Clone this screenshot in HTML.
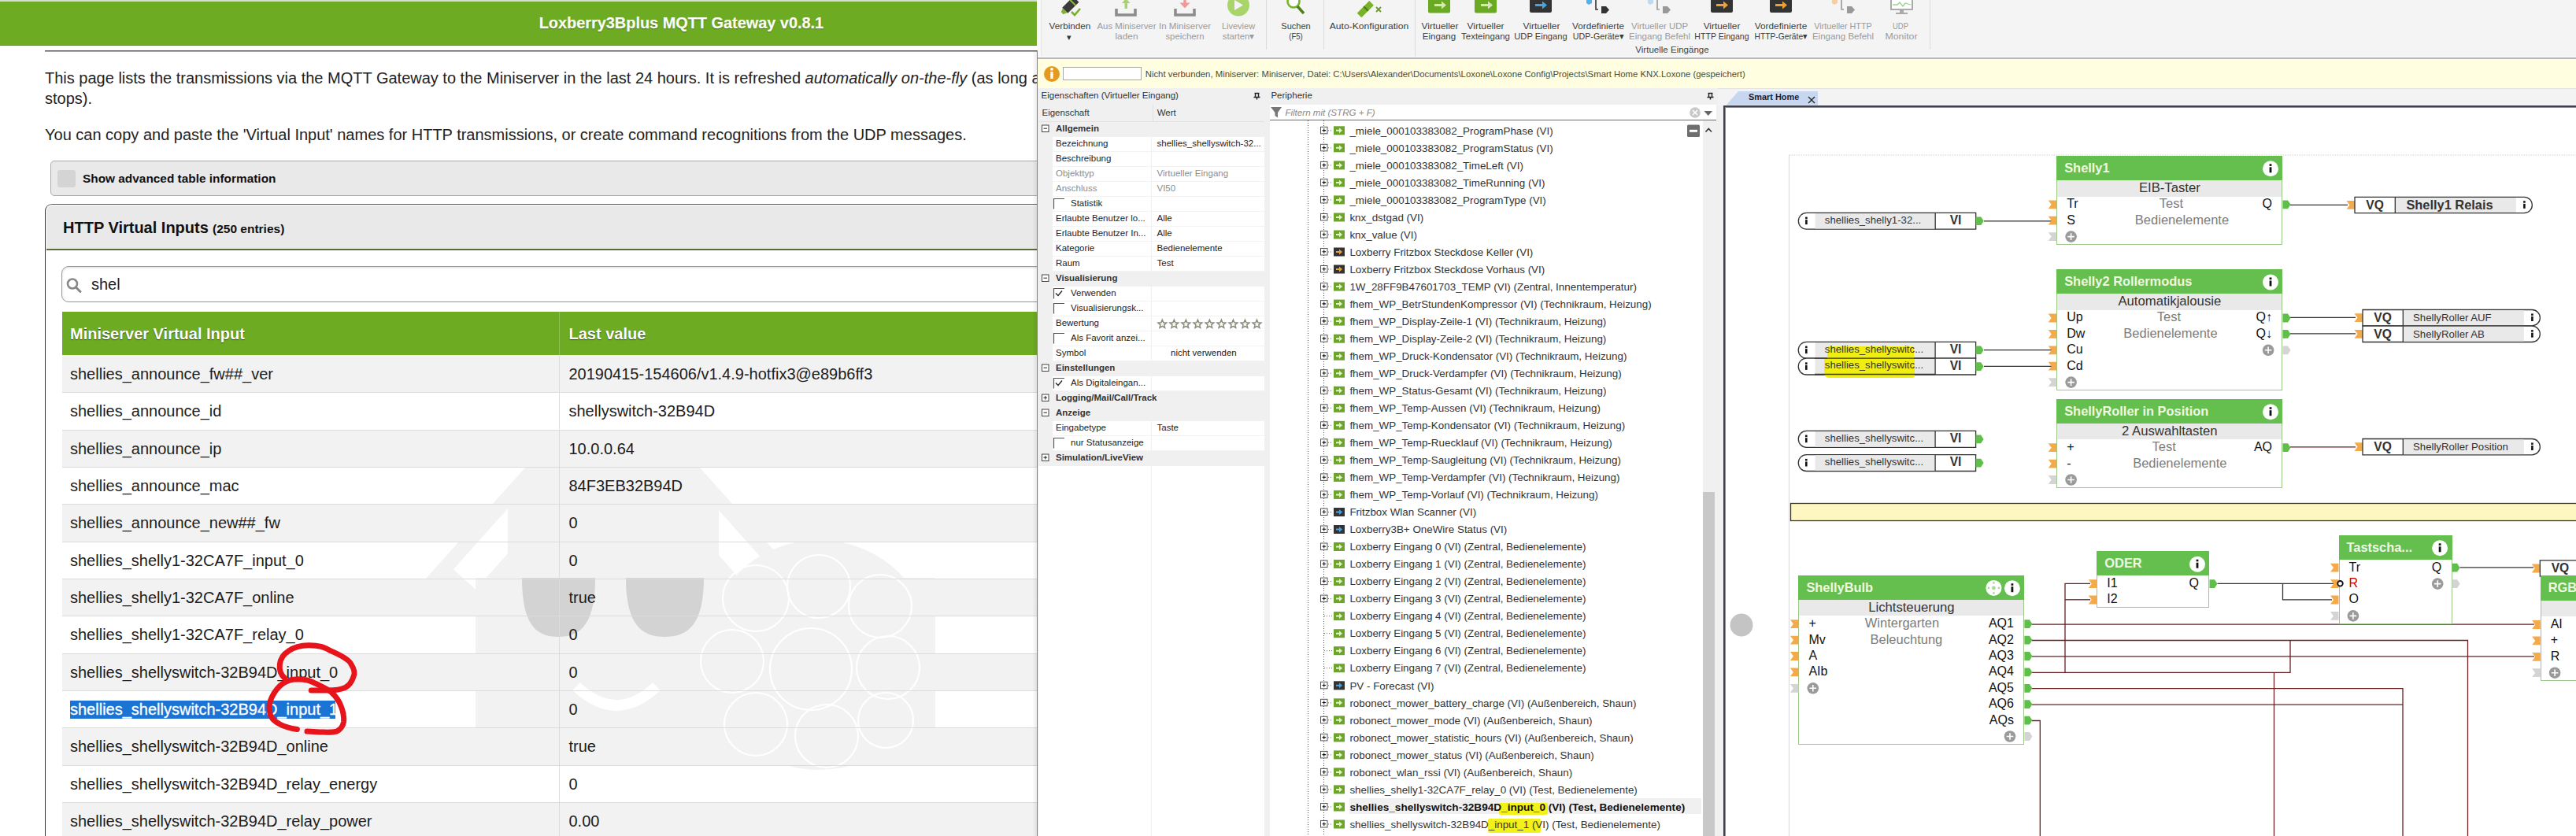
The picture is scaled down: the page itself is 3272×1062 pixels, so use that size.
<!DOCTYPE html><html><head><meta charset="utf-8"><style>
html,body{margin:0;padding:0}
body{width:3272px;height:1062px;position:relative;overflow:hidden;background:#fff;font-family:"Liberation Sans",sans-serif}
.t{position:absolute;white-space:pre;line-height:1}
.b{position:absolute;box-sizing:border-box}
.web{position:absolute;left:0;top:0;width:1318px;height:1062px;overflow:hidden;background:#fff}
.app{position:absolute;left:0;top:0;width:3272px;height:1062px;clip-path:inset(0 0 0 1318px);background:#f0f0f0}
svg{position:absolute;left:0;top:0}
</style></head><body>

<div class="web">
<div class="b" style="left:0.00px;top:0.00px;width:1317.00px;height:2.00px;background:#d9d9d9"></div>
<div class="b" style="left:0.00px;top:2.00px;width:1317.00px;height:56.00px;background:#6dab22;border-bottom:1px solid #5a8f1a"></div>
<div class="t" style="left:684.70px;top:20.45px;font-size:19.9px;color:#fbfff2;font-weight:bold;font-style:normal;text-shadow:0 1px 1px #3a5a15;-webkit-text-stroke:0.25px #fbfff2">Loxberry3Bplus MQTT Gateway v0.8.1</div>
<div class="b" style="left:57.00px;top:64.00px;width:1260.00px;height:2.00px;background:#555;border-bottom:1px solid #aaa"></div>
<div class="t" style="left:57.00px;top:89.07px;font-size:20px;color:#222;font-weight:normal;font-style:normal;">This page lists the transmissions via the MQTT Gateway to the Miniserver in the last 24 hours. It is refreshed <i>automatically on-the-fly</i> (as long as the page is open and the gateway is running</div>
<div class="t" style="left:57.00px;top:114.67px;font-size:20px;color:#222;font-weight:normal;font-style:normal;">stops).</div>
<div class="t" style="left:57.00px;top:161.07px;font-size:20px;color:#222;font-weight:normal;font-style:normal;">You can copy and paste the 'Virtual Input' names for HTTP transmissions, or create command recognitions from the UDP messages.</div>
<div class="b" style="left:64.00px;top:204.00px;width:1300.00px;height:45.00px;background:#e9e9e9;border:1px solid #aaa;border-radius:5px"></div>
<div class="b" style="left:73.00px;top:215.50px;width:23.00px;height:22.50px;background:#d4d4d4;border-radius:3px"></div>
<div class="t" style="left:105.00px;top:218.96px;font-size:15.4px;color:#111;font-weight:bold;font-style:normal;">Show advanced table information</div>
<div class="b" style="left:57.00px;top:259.00px;width:1300.00px;height:820.00px;border:1.5px solid #333;border-top-color:#4d6b30;border-radius:9px 0 0 0;background:#fff"></div>
<div class="b" style="left:58.50px;top:260.50px;width:1300.00px;height:57.50px;background:#e9e9e9;border-radius:8px 0 0 0;border-bottom:2px solid #556f38"></div>
<div class="t" style="left:80.00px;top:279.07px;font-size:20px;color:#111;font-weight:bold;font-style:normal;">HTTP Virtual Inputs</div>
<div class="t" style="left:270.00px;top:282.88px;font-size:15.5px;color:#111;font-weight:bold;font-style:normal;">(250 entries)</div>
<div class="b" style="left:78.00px;top:338.00px;width:1300.00px;height:46.00px;background:#fff;border:1px solid #999;border-radius:9px;box-shadow:inset 0 1px 3px rgba(0,0,0,.15)"></div>
<svg width="1317" height="1062" style="left:0;top:0"><circle cx="92" cy="360.5" r="6" fill="none" stroke="#888" stroke-width="2.6"/><line x1="96.5" y1="365" x2="102" y2="370.5" stroke="#888" stroke-width="3" stroke-linecap="round"/></svg>
<div class="t" style="left:116.00px;top:350.57px;font-size:20px;color:#222;font-weight:normal;font-style:normal;">shel</div>
<div class="b" style="left:79.00px;top:396.00px;width:1240.00px;height:55.00px;background:#6dab22"></div>
<div class="b" style="left:710.00px;top:396.00px;width:1.00px;height:55.00px;background:#8fc255"></div>
<div class="t" style="left:89.00px;top:414.07px;font-size:20px;color:#fff;font-weight:bold;font-style:normal;text-shadow:0 1px 1px #2e4a10">Miniserver Virtual Input</div>
<div class="t" style="left:722.50px;top:414.07px;font-size:20px;color:#fff;font-weight:bold;font-style:normal;text-shadow:0 1px 1px #2e4a10">Last value</div>
<div class="b" style="left:79.00px;top:451.00px;width:1240.00px;height:47.33px;background:#f2f2f2"></div>
<div class="b" style="left:79.00px;top:498.33px;width:1240.00px;height:47.33px;background:#ffffff"></div>
<div class="b" style="left:79.00px;top:545.66px;width:1240.00px;height:47.33px;background:#f2f2f2"></div>
<div class="b" style="left:79.00px;top:592.99px;width:1240.00px;height:47.33px;background:#ffffff"></div>
<div class="b" style="left:79.00px;top:640.32px;width:1240.00px;height:47.33px;background:#f2f2f2"></div>
<div class="b" style="left:79.00px;top:687.65px;width:1240.00px;height:47.33px;background:#ffffff"></div>
<div class="b" style="left:79.00px;top:734.98px;width:1240.00px;height:47.33px;background:#f2f2f2"></div>
<div class="b" style="left:79.00px;top:782.31px;width:1240.00px;height:47.33px;background:#ffffff"></div>
<div class="b" style="left:79.00px;top:829.64px;width:1240.00px;height:47.33px;background:#f2f2f2"></div>
<div class="b" style="left:79.00px;top:876.97px;width:1240.00px;height:47.33px;background:#ffffff"></div>
<div class="b" style="left:79.00px;top:924.30px;width:1240.00px;height:47.33px;background:#f2f2f2"></div>
<div class="b" style="left:79.00px;top:971.63px;width:1240.00px;height:47.33px;background:#ffffff"></div>
<div class="b" style="left:79.00px;top:1018.96px;width:1240.00px;height:47.33px;background:#f2f2f2"></div>
<svg width="1317" height="1062">
<defs><clipPath id="wm"><rect x="79" y="547" width="1240" height="520"/></clipPath></defs>
<g clip-path="url(#wm)">
<polygon points="540,736 778,470 1016,736" fill="#f2f2f2"/>
<polyline points="590,736 778,526 966,736" fill="none" stroke="#fff" stroke-width="38"/>
<polygon points="645,641 778,492 913,641 913,736 645,736" fill="#f2f2f2"/>
<rect x="604" y="734" width="584" height="192" fill="#f2f2f2"/>
<circle cx="1040" cy="832" r="146" fill="#f2f2f2"/>
<g fill="none" stroke="#fff" stroke-width="2.2">
<circle cx="960" cy="760" r="42"/><circle cx="1040" cy="745" r="40"/><circle cx="1118" cy="770" r="40"/>
<circle cx="930" cy="840" r="40"/><circle cx="1030" cy="850" r="52"/><circle cx="1128" cy="848" r="40"/>
<circle cx="960" cy="920" r="40"/><circle cx="1050" cy="935" r="40"/><circle cx="1125" cy="915" r="35"/>
</g>
<path d="M663,734 L756,734 C756,792 738,809 709,809 C680,809 663,792 663,734 Z" fill="#d3d3d3"/>
<path d="M795,734 L894,734 C894,792 875,809 844,809 C814,809 795,792 795,734 Z" fill="#d3d3d3"/>
<path d="M732,872 Q783,920 834,872" fill="none" stroke="#fff" stroke-width="14"/>
</g>
</svg>
<div class="b" style="left:79.00px;top:498.33px;width:1240.00px;height:1.00px;background:#dcdcdc"></div>
<div class="b" style="left:79.00px;top:545.66px;width:1240.00px;height:1.00px;background:#dcdcdc"></div>
<div class="b" style="left:79.00px;top:592.99px;width:1240.00px;height:1.00px;background:#dcdcdc"></div>
<div class="b" style="left:79.00px;top:640.32px;width:1240.00px;height:1.00px;background:#dcdcdc"></div>
<div class="b" style="left:79.00px;top:687.65px;width:1240.00px;height:1.00px;background:#dcdcdc"></div>
<div class="b" style="left:79.00px;top:734.98px;width:1240.00px;height:1.00px;background:#dcdcdc"></div>
<div class="b" style="left:79.00px;top:782.31px;width:1240.00px;height:1.00px;background:#dcdcdc"></div>
<div class="b" style="left:79.00px;top:829.64px;width:1240.00px;height:1.00px;background:#dcdcdc"></div>
<div class="b" style="left:79.00px;top:876.97px;width:1240.00px;height:1.00px;background:#dcdcdc"></div>
<div class="b" style="left:79.00px;top:924.30px;width:1240.00px;height:1.00px;background:#dcdcdc"></div>
<div class="b" style="left:79.00px;top:971.63px;width:1240.00px;height:1.00px;background:#dcdcdc"></div>
<div class="b" style="left:79.00px;top:1018.96px;width:1240.00px;height:1.00px;background:#dcdcdc"></div>
<div class="b" style="left:79.00px;top:1066.29px;width:1240.00px;height:1.00px;background:#dcdcdc"></div>
<div class="b" style="left:710.00px;top:451.00px;width:1.00px;height:615.29px;background:#dcdcdc"></div>
<div class="t" style="left:89.00px;top:465.07px;font-size:20px;color:#1c1c1c;font-weight:normal;font-style:normal;">shellies_announce_fw##_ver</div>
<div class="t" style="left:722.50px;top:465.07px;font-size:20px;color:#1c1c1c;font-weight:normal;font-style:normal;">20190415-154606/v1.4.9-hotfix3@e89b6ff3</div>
<div class="t" style="left:89.00px;top:512.40px;font-size:20px;color:#1c1c1c;font-weight:normal;font-style:normal;">shellies_announce_id</div>
<div class="t" style="left:722.50px;top:512.40px;font-size:20px;color:#1c1c1c;font-weight:normal;font-style:normal;">shellyswitch-32B94D</div>
<div class="t" style="left:89.00px;top:559.73px;font-size:20px;color:#1c1c1c;font-weight:normal;font-style:normal;">shellies_announce_ip</div>
<div class="t" style="left:722.50px;top:559.73px;font-size:20px;color:#1c1c1c;font-weight:normal;font-style:normal;">10.0.0.64</div>
<div class="t" style="left:89.00px;top:607.06px;font-size:20px;color:#1c1c1c;font-weight:normal;font-style:normal;">shellies_announce_mac</div>
<div class="t" style="left:722.50px;top:607.06px;font-size:20px;color:#1c1c1c;font-weight:normal;font-style:normal;">84F3EB32B94D</div>
<div class="t" style="left:89.00px;top:654.39px;font-size:20px;color:#1c1c1c;font-weight:normal;font-style:normal;">shellies_announce_new##_fw</div>
<div class="t" style="left:722.50px;top:654.39px;font-size:20px;color:#1c1c1c;font-weight:normal;font-style:normal;">0</div>
<div class="t" style="left:89.00px;top:701.72px;font-size:20px;color:#1c1c1c;font-weight:normal;font-style:normal;">shellies_shelly1-32CA7F_input_0</div>
<div class="t" style="left:722.50px;top:701.72px;font-size:20px;color:#1c1c1c;font-weight:normal;font-style:normal;">0</div>
<div class="t" style="left:89.00px;top:749.05px;font-size:20px;color:#1c1c1c;font-weight:normal;font-style:normal;">shellies_shelly1-32CA7F_online</div>
<div class="t" style="left:722.50px;top:749.05px;font-size:20px;color:#1c1c1c;font-weight:normal;font-style:normal;">true</div>
<div class="t" style="left:89.00px;top:796.38px;font-size:20px;color:#1c1c1c;font-weight:normal;font-style:normal;">shellies_shelly1-32CA7F_relay_0</div>
<div class="t" style="left:722.50px;top:796.38px;font-size:20px;color:#1c1c1c;font-weight:normal;font-style:normal;">0</div>
<div class="t" style="left:89.00px;top:843.71px;font-size:20px;color:#1c1c1c;font-weight:normal;font-style:normal;">shellies_shellyswitch-32B94D_input_0</div>
<div class="t" style="left:722.50px;top:843.71px;font-size:20px;color:#1c1c1c;font-weight:normal;font-style:normal;">0</div>
<div class="b" style="left:89.00px;top:890.00px;width:337.00px;height:22.70px;background:#1b74d4"></div>
<div class="t" style="left:89.00px;top:891.04px;font-size:20px;color:#fff;font-weight:normal;font-style:normal;-webkit-text-stroke:0.3px #fff">shellies_shellyswitch-32B94D_input_1</div>
<div class="t" style="left:722.50px;top:891.04px;font-size:20px;color:#1c1c1c;font-weight:normal;font-style:normal;">0</div>
<div class="t" style="left:89.00px;top:938.37px;font-size:20px;color:#1c1c1c;font-weight:normal;font-style:normal;">shellies_shellyswitch-32B94D_online</div>
<div class="t" style="left:722.50px;top:938.37px;font-size:20px;color:#1c1c1c;font-weight:normal;font-style:normal;">true</div>
<div class="t" style="left:89.00px;top:985.70px;font-size:20px;color:#1c1c1c;font-weight:normal;font-style:normal;">shellies_shellyswitch-32B94D_relay_energy</div>
<div class="t" style="left:722.50px;top:985.70px;font-size:20px;color:#1c1c1c;font-weight:normal;font-style:normal;">0</div>
<div class="t" style="left:89.00px;top:1033.03px;font-size:20px;color:#1c1c1c;font-weight:normal;font-style:normal;">shellies_shellyswitch-32B94D_relay_power</div>
<div class="t" style="left:722.50px;top:1033.03px;font-size:20px;color:#1c1c1c;font-weight:normal;font-style:normal;">0.00</div>
<svg width="1317" height="1062"><g fill="none" stroke="#e8141c" stroke-width="7" stroke-linecap="round" stroke-linejoin="round">
<path d="M361.3,861 C352,853 353,835 366.6,826.9 C375,821 385,819.7 391.7,819.7 C405,819.5 412,822 420.4,826.9 C432,832 443,838 445.6,843 C450,850 451,856 449.1,859.2 C447,866 443,871 438.4,873.5 C430,877 423,877 416.9,877.1 L395.3,877.1"/>
<path d="M377.4,926.5 C368,925 361,923 355.9,920.2 C348,916 344,912 343.3,907.6 C341,899 342,892 345.1,886.1 C349,878 354,872 359.5,868.2 C365,864 372,862.8 379.2,862.8 C388,863 395,865 400.7,868.2 C408,872 415,875 420.4,878.9 C427,885 431,891 433,896.9 C436,904 437,911 436.6,916.6 C436,922 432,927 427.6,929.1 C420,931 412,930 406.1,930 L390,929.1"/>
</g></svg>
<div class="b" style="left:1311.00px;top:64.00px;width:6.00px;height:998.00px;background:linear-gradient(to right,rgba(0,0,0,0),rgba(0,0,0,0.07))"></div>
<div class="b" style="left:1317.00px;top:64.00px;width:1.00px;height:998.00px;background:#808080"></div>
</div>
<div class="app">
<div class="b" style="left:1318.00px;top:0.00px;width:1954.00px;height:74.00px;background:#f8f8f8"></div>
<div class="b" style="left:1321.50px;top:0.00px;width:1950.50px;height:71.00px;background:#f4f4f4;border-left:1px solid #e4e4e4"></div>
<div class="b" style="left:1318.00px;top:72.50px;width:1954.00px;height:2.00px;background:#b8b8b8"></div>
<div class="b" style="left:1607.60px;top:0.00px;width:1.00px;height:63.00px;background:#dcdcdc"></div>
<div class="b" style="left:1681.00px;top:0.00px;width:1.00px;height:63.00px;background:#dcdcdc"></div>
<div class="b" style="left:1796.80px;top:0.00px;width:1.00px;height:72.00px;background:#dcdcdc"></div>
<div class="b" style="left:2451.00px;top:0.00px;width:1.00px;height:63.00px;background:#dcdcdc"></div>
<div class="t" style="left:758.60px;width:1200px;text-align:center;top:28.26px;font-size:11.5px;color:#3c3c3c;font-weight:normal;font-style:normal;;transform:scaleX(1.0194);transform-origin:50% 0">Verbinden</div>
<div class="t" style="left:758.40px;width:1200px;text-align:center;top:41.69px;font-size:11px;color:#333;font-weight:normal;font-style:normal;">▾</div>
<div class="t" style="left:830.75px;width:1200px;text-align:center;top:28.26px;font-size:11.5px;color:#9a9a9a;font-weight:normal;font-style:normal;;transform:scaleX(0.9849);transform-origin:50% 0">Aus Miniserver</div>
<div class="t" style="left:830.50px;width:1200px;text-align:center;top:41.26px;font-size:11.5px;color:#9a9a9a;font-weight:normal;font-style:normal;;transform:scaleX(1.0306);transform-origin:50% 0">laden</div>
<div class="t" style="left:905.35px;width:1200px;text-align:center;top:28.26px;font-size:11.5px;color:#9a9a9a;font-weight:normal;font-style:normal;;transform:scaleX(1.0042);transform-origin:50% 0">In Miniserver</div>
<div class="t" style="left:904.90px;width:1200px;text-align:center;top:41.26px;font-size:11.5px;color:#9a9a9a;font-weight:normal;font-style:normal;;transform:scaleX(0.9867);transform-origin:50% 0">speichern</div>
<div class="t" style="left:973.30px;width:1200px;text-align:center;top:28.26px;font-size:11.5px;color:#9a9a9a;font-weight:normal;font-style:normal;;transform:scaleX(0.9568);transform-origin:50% 0">Liveview</div>
<div class="t" style="left:972.95px;width:1200px;text-align:center;top:41.26px;font-size:11.5px;color:#9a9a9a;font-weight:normal;font-style:normal;;transform:scaleX(0.9798);transform-origin:50% 0">starten▾</div>
<div class="t" style="left:1045.85px;width:1200px;text-align:center;top:28.26px;font-size:11.5px;color:#3c3c3c;font-weight:normal;font-style:normal;;transform:scaleX(0.9563);transform-origin:50% 0">Suchen</div>
<div class="t" style="left:1046.10px;width:1200px;text-align:center;top:41.26px;font-size:11.5px;color:#3c3c3c;font-weight:normal;font-style:normal;;transform:scaleX(0.8349);transform-origin:50% 0">(F5)</div>
<div class="t" style="left:1139.20px;width:1200px;text-align:center;top:28.26px;font-size:11.5px;color:#3c3c3c;font-weight:normal;font-style:normal;;transform:scaleX(1.0540);transform-origin:50% 0">Auto-Konfiguration</div>
<div class="t" style="left:1228.50px;width:1200px;text-align:center;top:28.26px;font-size:11.5px;color:#3c3c3c;font-weight:normal;font-style:normal;;transform:scaleX(1.0405);transform-origin:50% 0">Virtueller</div>
<div class="t" style="left:1228.25px;width:1200px;text-align:center;top:41.26px;font-size:11.5px;color:#3c3c3c;font-weight:normal;font-style:normal;;transform:scaleX(1.0070);transform-origin:50% 0">Eingang</div>
<div class="t" style="left:1287.45px;width:1200px;text-align:center;top:28.26px;font-size:11.5px;color:#3c3c3c;font-weight:normal;font-style:normal;;transform:scaleX(1.0427);transform-origin:50% 0">Virtueller</div>
<div class="t" style="left:1286.70px;width:1200px;text-align:center;top:41.26px;font-size:11.5px;color:#3c3c3c;font-weight:normal;font-style:normal;;transform:scaleX(0.9964);transform-origin:50% 0">Texteingang</div>
<div class="t" style="left:1357.50px;width:1200px;text-align:center;top:28.26px;font-size:11.5px;color:#3c3c3c;font-weight:normal;font-style:normal;;transform:scaleX(1.0405);transform-origin:50% 0">Virtueller</div>
<div class="t" style="left:1356.90px;width:1200px;text-align:center;top:41.26px;font-size:11.5px;color:#3c3c3c;font-weight:normal;font-style:normal;;transform:scaleX(0.9701);transform-origin:50% 0">UDP Eingang</div>
<div class="t" style="left:1430.40px;width:1200px;text-align:center;top:28.26px;font-size:11.5px;color:#3c3c3c;font-weight:normal;font-style:normal;;transform:scaleX(1.0221);transform-origin:50% 0">Vordefinierte</div>
<div class="t" style="left:1430.00px;width:1200px;text-align:center;top:41.26px;font-size:11.5px;color:#3c3c3c;font-weight:normal;font-style:normal;;transform:scaleX(0.9291);transform-origin:50% 0">UDP-Geräte▾</div>
<div class="t" style="left:1508.00px;width:1200px;text-align:center;top:28.26px;font-size:11.5px;color:#9a9a9a;font-weight:normal;font-style:normal;;transform:scaleX(0.9911);transform-origin:50% 0">Virtueller UDP</div>
<div class="t" style="left:1508.40px;width:1200px;text-align:center;top:41.26px;font-size:11.5px;color:#9a9a9a;font-weight:normal;font-style:normal;;transform:scaleX(0.9999);transform-origin:50% 0">Eingang Befehl</div>
<div class="t" style="left:1587.35px;width:1200px;text-align:center;top:28.26px;font-size:11.5px;color:#3c3c3c;font-weight:normal;font-style:normal;;transform:scaleX(1.0338);transform-origin:50% 0">Virtueller</div>
<div class="t" style="left:1586.95px;width:1200px;text-align:center;top:41.26px;font-size:11.5px;color:#3c3c3c;font-weight:normal;font-style:normal;;transform:scaleX(0.9213);transform-origin:50% 0">HTTP Eingang</div>
<div class="t" style="left:1662.25px;width:1200px;text-align:center;top:28.26px;font-size:11.5px;color:#3c3c3c;font-weight:normal;font-style:normal;;transform:scaleX(1.0299);transform-origin:50% 0">Vordefinierte</div>
<div class="t" style="left:1661.65px;width:1200px;text-align:center;top:41.26px;font-size:11.5px;color:#3c3c3c;font-weight:normal;font-style:normal;;transform:scaleX(0.8926);transform-origin:50% 0">HTTP-Geräte▾</div>
<div class="t" style="left:1741.15px;width:1200px;text-align:center;top:28.26px;font-size:11.5px;color:#9a9a9a;font-weight:normal;font-style:normal;;transform:scaleX(0.9350);transform-origin:50% 0">Virtueller HTTP</div>
<div class="t" style="left:1741.40px;width:1200px;text-align:center;top:41.26px;font-size:11.5px;color:#9a9a9a;font-weight:normal;font-style:normal;;transform:scaleX(1.0024);transform-origin:50% 0">Eingang Befehl</div>
<div class="t" style="left:1814.10px;width:1200px;text-align:center;top:28.26px;font-size:11.5px;color:#9a9a9a;font-weight:normal;font-style:normal;;transform:scaleX(0.8154);transform-origin:50% 0">UDP</div>
<div class="t" style="left:1815.20px;width:1200px;text-align:center;top:41.26px;font-size:11.5px;color:#9a9a9a;font-weight:normal;font-style:normal;;transform:scaleX(1.0692);transform-origin:50% 0">Monitor</div>
<div class="t" style="left:1524.30px;width:1200px;text-align:center;top:57.76px;font-size:11.5px;color:#444;font-weight:normal;font-style:normal;;transform:scaleX(1.0028);transform-origin:50% 0">Virtuelle Eingänge</div>
<svg width="3272" height="80">
<g transform="translate(1357,9) rotate(45)"><rect x="-5" y="-14" width="10" height="20" fill="#3a3a3a"/><rect x="-5" y="-9" width="10" height="2" fill="#8fbf3a"/><path d="M-4,6 L4,6 L2,11 L-2,11 Z" fill="#7fb52a"/></g>
<path d="M1361,15 L1365,19 L1372,11" fill="none" stroke="#78b22a" stroke-width="2.6"/>
<path d="M1418,11 L1418,19 L1442,19 L1442,11" fill="none" stroke="#8c8c8c" stroke-width="3.6"/>
<rect x="1428.5" y="0" width="3.5" height="11" fill="#a9d26d"/><path d="M1425,4 L1435.5,4 L1430.2,-2 Z" fill="#a9d26d"/>
<path d="M1493,11 L1493,19 L1517,19 L1517,11" fill="none" stroke="#8c8c8c" stroke-width="3.6"/>
<rect x="1503.3" y="0" width="3.4" height="5" fill="#ee9a96"/><path d="M1498.5,3.5 L1511.5,3.5 L1505,10.5 Z" fill="#ee9a96"/>
<circle cx="1573" cy="6.5" r="14" fill="#a8d46a"/><path d="M1568,0 L1568,13 L1579,6.5 Z" fill="#f4f4f4"/>
<circle cx="1643" cy="2" r="7.5" fill="#fff" stroke="#78b22a" stroke-width="2.6"/><path d="M1648,8 L1656,17" stroke="#4f7f1a" stroke-width="3.4"/>
<g transform="translate(1735,11) rotate(-45)"><rect x="-12" y="-4" width="22" height="8" fill="#78b22a"/><rect x="-1" y="-4" width="2" height="8" fill="#4a7a15"/></g>
<path d="M1748,9 L1754,15 M1754,9 L1748,15" stroke="#6a9a2a" stroke-width="1.8"/>
<rect x="1814" y="-3" width="28" height="19.5" rx="2" fill="#6aaa22"/><path d="M1822,5 L1831,5 L1831,1.5 L1837,6.5 L1831,11.5 L1831,8 L1822,8 Z" fill="#d7e6b8"/>
<rect x="1873" y="-3" width="28" height="19.5" rx="2" fill="#6aaa22"/><path d="M1881,5 L1890,5 L1890,1.5 L1896,6.5 L1890,11.5 L1890,8 L1881,8 Z" fill="#d7e6b8"/>
<rect x="1943" y="-3" width="28" height="19" rx="2" fill="#333"/><path d="M1950,5 L1959,5 L1959,1.5 L1965,6.5 L1959,11.5 L1959,8 L1950,8 Z" fill="#42a5e8"/>
<path d="M2015,0 L2022,0 L2022,4 L2018,6 L2015,4 Z" fill="#52b0ee"/><path d="M2027,0 L2027,12 L2030,12" fill="none" stroke="#333" stroke-width="1.6"/><path d="M2034,8 L2040,8 L2044,12.5 L2040,17 L2034,17 Z" fill="#333"/>
<path d="M2093,0 L2100,0 L2100,4 L2096,6 L2093,4 Z" fill="#b6dcf6"/><path d="M2105,0 L2105,12 L2108,12" fill="none" stroke="#999" stroke-width="1.6"/><path d="M2112,8 L2118,8 L2122,12.5 L2118,17 L2112,17 Z" fill="#999"/>
<rect x="2173" y="-3" width="28" height="19" rx="2" fill="#333"/><path d="M2180,5 L2189,5 L2189,1.5 L2195,6.5 L2189,11.5 L2189,8 L2180,8 Z" fill="#f0a030"/>
<rect x="2248" y="-3" width="28" height="19" rx="2" fill="#333"/><path d="M2255,5 L2264,5 L2264,1.5 L2270,6.5 L2264,11.5 L2264,8 L2255,8 Z" fill="#f0a030"/>
<path d="M2327,0 L2334,0 L2334,4 L2330,6 L2327,4 Z" fill="#f8cf9a"/><path d="M2339,0 L2339,12 L2342,12" fill="none" stroke="#999" stroke-width="1.6"/><path d="M2346,8 L2352,8 L2356,12.5 L2352,17 L2346,17 Z" fill="#999"/>
<rect x="2402" y="-3" width="27" height="15" fill="#fff" stroke="#aaa" stroke-width="2"/><path d="M2404,6 L2410,6 L2413,3 L2417,8 L2420,4 L2427,6" fill="none" stroke="#9dd08a" stroke-width="1.3"/><rect x="2413" y="13" width="5" height="3" fill="#aaa"/><rect x="2408" y="16" width="15" height="2" fill="#aaa"/>
</svg>
<div class="b" style="left:1318.00px;top:74.50px;width:1954.00px;height:37.00px;background:#fffee0"></div>
<svg width="3272" height="120"><circle cx="1336" cy="94" r="10" fill="#e39a1f"/><rect x="1334.3" y="91" width="3.4" height="9" fill="#fff"/><circle cx="1336" cy="87.8" r="1.9" fill="#fff"/></svg>
<div class="b" style="left:1350.00px;top:85.40px;width:100.00px;height:16.40px;background:#fff;border:1px solid #a8a8a8"></div>
<div class="t" style="left:1454.70px;top:89.27px;font-size:11.37px;color:#4a4a3a;font-weight:normal;font-style:normal;">Nicht verbunden, Miniserver: Miniserver, Datei: C:\Users\Alexander\Documents\Loxone\Loxone Config\Projects\Smart Home KNX.Loxone (gespeichert)</div>
<div class="t" style="left:1322.60px;top:116.06px;font-size:11.5px;color:#333;font-weight:normal;font-style:normal;">Eigenschaften (Virtueller Eingang)</div>
<svg width="3272" height="1062"><path d="M1593.5,118.5 L1599.5,118.5 M1594.5,118.5 L1594.5,123.5 M1598.5,118.5 L1598.5,123.5 M1592.5,123.5 L1600.5,123.5 M1596.5,123.5 L1596.5,126.5" stroke="#222" stroke-width="1.4" fill="none"/></svg>
<div class="b" style="left:1319.00px;top:131.50px;width:288.00px;height:23.00px;background:#f0f0f0;border-bottom:1px solid #e2e2e2"></div>
<div class="b" style="left:1463.60px;top:133.00px;width:1.00px;height:21.00px;background:#e0e0e0"></div>
<div class="t" style="left:1323.50px;top:138.16px;font-size:11.5px;color:#333;font-weight:normal;font-style:normal;">Eigenschaft</div>
<div class="t" style="left:1469.70px;top:138.16px;font-size:11.5px;color:#333;font-weight:normal;font-style:normal;">Wert</div>
<div class="b" style="left:1319.00px;top:154.50px;width:288.00px;height:908.00px;background:#fff"></div>
<div class="b" style="left:1462.00px;top:591.00px;width:1.00px;height:471.00px;background:#f0f0f0"></div>
<div class="b" style="left:1319.00px;top:154.50px;width:288.00px;height:19.00px;background:#f0f0f0"></div>
<div class="t" style="left:1341.00px;top:158.36px;font-size:11.5px;color:#333;font-weight:bold;font-style:normal;">Allgemein</div>
<div class="b" style="left:1319.00px;top:173.50px;width:18.00px;height:19.00px;background:#f0f0f0"></div>
<div class="b" style="left:1337.00px;top:191.50px;width:269.00px;height:1.00px;background:#f3f3f3"></div>
<div class="b" style="left:1462.00px;top:173.50px;width:1.00px;height:19.00px;background:#f0f0f0"></div>
<div class="t" style="left:1341.00px;top:177.36px;font-size:11.5px;color:#222;font-weight:normal;font-style:normal;">Bezeichnung</div>
<div class="t" style="left:1469.50px;top:177.36px;font-size:11.5px;color:#222;font-weight:normal;font-style:normal;">shellies_shellyswitch-32...</div>
<div class="b" style="left:1319.00px;top:192.50px;width:18.00px;height:19.00px;background:#f0f0f0"></div>
<div class="b" style="left:1337.00px;top:210.50px;width:269.00px;height:1.00px;background:#f3f3f3"></div>
<div class="b" style="left:1462.00px;top:192.50px;width:1.00px;height:19.00px;background:#f0f0f0"></div>
<div class="t" style="left:1341.00px;top:196.36px;font-size:11.5px;color:#222;font-weight:normal;font-style:normal;">Beschreibung</div>
<div class="b" style="left:1319.00px;top:211.50px;width:18.00px;height:19.00px;background:#f0f0f0"></div>
<div class="b" style="left:1337.00px;top:229.50px;width:269.00px;height:1.00px;background:#f3f3f3"></div>
<div class="b" style="left:1462.00px;top:211.50px;width:1.00px;height:19.00px;background:#f0f0f0"></div>
<div class="t" style="left:1341.00px;top:215.36px;font-size:11.5px;color:#8c8c8c;font-weight:normal;font-style:normal;">Objekttyp</div>
<div class="t" style="left:1469.50px;top:215.36px;font-size:11.5px;color:#8c8c8c;font-weight:normal;font-style:normal;">Virtueller Eingang</div>
<div class="b" style="left:1319.00px;top:230.50px;width:18.00px;height:19.00px;background:#f0f0f0"></div>
<div class="b" style="left:1337.00px;top:248.50px;width:269.00px;height:1.00px;background:#f3f3f3"></div>
<div class="b" style="left:1462.00px;top:230.50px;width:1.00px;height:19.00px;background:#f0f0f0"></div>
<div class="t" style="left:1341.00px;top:234.36px;font-size:11.5px;color:#8c8c8c;font-weight:normal;font-style:normal;">Anschluss</div>
<div class="t" style="left:1469.50px;top:234.36px;font-size:11.5px;color:#8c8c8c;font-weight:normal;font-style:normal;">VI50</div>
<div class="b" style="left:1319.00px;top:249.50px;width:18.00px;height:19.00px;background:#f0f0f0"></div>
<div class="b" style="left:1337.00px;top:267.50px;width:269.00px;height:1.00px;background:#f3f3f3"></div>
<div class="b" style="left:1462.00px;top:249.50px;width:1.00px;height:19.00px;background:#f0f0f0"></div>
<div class="t" style="left:1360.00px;top:253.36px;font-size:11.5px;color:#222;font-weight:normal;font-style:normal;">Statistik</div>
<div class="b" style="left:1319.00px;top:268.50px;width:18.00px;height:19.00px;background:#f0f0f0"></div>
<div class="b" style="left:1337.00px;top:286.50px;width:269.00px;height:1.00px;background:#f3f3f3"></div>
<div class="b" style="left:1462.00px;top:268.50px;width:1.00px;height:19.00px;background:#f0f0f0"></div>
<div class="t" style="left:1341.00px;top:272.36px;font-size:11.5px;color:#222;font-weight:normal;font-style:normal;">Erlaubte Benutzer lo...</div>
<div class="t" style="left:1469.50px;top:272.36px;font-size:11.5px;color:#222;font-weight:normal;font-style:normal;">Alle</div>
<div class="b" style="left:1319.00px;top:287.50px;width:18.00px;height:19.00px;background:#f0f0f0"></div>
<div class="b" style="left:1337.00px;top:305.50px;width:269.00px;height:1.00px;background:#f3f3f3"></div>
<div class="b" style="left:1462.00px;top:287.50px;width:1.00px;height:19.00px;background:#f0f0f0"></div>
<div class="t" style="left:1341.00px;top:291.36px;font-size:11.5px;color:#222;font-weight:normal;font-style:normal;">Erlaubte Benutzer In...</div>
<div class="t" style="left:1469.50px;top:291.36px;font-size:11.5px;color:#222;font-weight:normal;font-style:normal;">Alle</div>
<div class="b" style="left:1319.00px;top:306.50px;width:18.00px;height:19.00px;background:#f0f0f0"></div>
<div class="b" style="left:1337.00px;top:324.50px;width:269.00px;height:1.00px;background:#f3f3f3"></div>
<div class="b" style="left:1462.00px;top:306.50px;width:1.00px;height:19.00px;background:#f0f0f0"></div>
<div class="t" style="left:1341.00px;top:310.36px;font-size:11.5px;color:#222;font-weight:normal;font-style:normal;">Kategorie</div>
<div class="t" style="left:1469.50px;top:310.36px;font-size:11.5px;color:#222;font-weight:normal;font-style:normal;">Bedienelemente</div>
<div class="b" style="left:1319.00px;top:325.50px;width:18.00px;height:19.00px;background:#f0f0f0"></div>
<div class="b" style="left:1337.00px;top:343.50px;width:269.00px;height:1.00px;background:#f3f3f3"></div>
<div class="b" style="left:1462.00px;top:325.50px;width:1.00px;height:19.00px;background:#f0f0f0"></div>
<div class="t" style="left:1341.00px;top:329.36px;font-size:11.5px;color:#222;font-weight:normal;font-style:normal;">Raum</div>
<div class="t" style="left:1469.50px;top:329.36px;font-size:11.5px;color:#222;font-weight:normal;font-style:normal;">Test</div>
<div class="b" style="left:1319.00px;top:344.50px;width:288.00px;height:19.00px;background:#f0f0f0"></div>
<div class="t" style="left:1341.00px;top:348.36px;font-size:11.5px;color:#333;font-weight:bold;font-style:normal;">Visualisierung</div>
<div class="b" style="left:1319.00px;top:363.50px;width:18.00px;height:19.00px;background:#f0f0f0"></div>
<div class="b" style="left:1337.00px;top:381.50px;width:269.00px;height:1.00px;background:#f3f3f3"></div>
<div class="b" style="left:1462.00px;top:363.50px;width:1.00px;height:19.00px;background:#f0f0f0"></div>
<div class="t" style="left:1360.00px;top:367.36px;font-size:11.5px;color:#222;font-weight:normal;font-style:normal;">Verwenden</div>
<div class="b" style="left:1319.00px;top:382.50px;width:18.00px;height:19.00px;background:#f0f0f0"></div>
<div class="b" style="left:1337.00px;top:400.50px;width:269.00px;height:1.00px;background:#f3f3f3"></div>
<div class="b" style="left:1462.00px;top:382.50px;width:1.00px;height:19.00px;background:#f0f0f0"></div>
<div class="t" style="left:1360.00px;top:386.36px;font-size:11.5px;color:#222;font-weight:normal;font-style:normal;">Visualisierungsk...</div>
<div class="b" style="left:1319.00px;top:401.50px;width:18.00px;height:19.00px;background:#f0f0f0"></div>
<div class="b" style="left:1337.00px;top:419.50px;width:269.00px;height:1.00px;background:#f3f3f3"></div>
<div class="b" style="left:1462.00px;top:401.50px;width:1.00px;height:19.00px;background:#f0f0f0"></div>
<div class="t" style="left:1341.00px;top:405.36px;font-size:11.5px;color:#222;font-weight:normal;font-style:normal;">Bewertung</div>
<div class="b" style="left:1319.00px;top:420.50px;width:18.00px;height:19.00px;background:#f0f0f0"></div>
<div class="b" style="left:1337.00px;top:438.50px;width:269.00px;height:1.00px;background:#f3f3f3"></div>
<div class="b" style="left:1462.00px;top:420.50px;width:1.00px;height:19.00px;background:#f0f0f0"></div>
<div class="t" style="left:1360.00px;top:424.36px;font-size:11.5px;color:#222;font-weight:normal;font-style:normal;">Als Favorit anzei...</div>
<div class="b" style="left:1319.00px;top:439.50px;width:18.00px;height:19.00px;background:#f0f0f0"></div>
<div class="b" style="left:1337.00px;top:457.50px;width:269.00px;height:1.00px;background:#f3f3f3"></div>
<div class="b" style="left:1462.00px;top:439.50px;width:1.00px;height:19.00px;background:#f0f0f0"></div>
<div class="t" style="left:1341.00px;top:443.36px;font-size:11.5px;color:#222;font-weight:normal;font-style:normal;">Symbol</div>
<div class="t" style="left:1487.00px;top:443.36px;font-size:11.5px;color:#222;font-weight:normal;font-style:normal;">nicht verwenden</div>
<div class="b" style="left:1319.00px;top:458.50px;width:288.00px;height:19.00px;background:#f0f0f0"></div>
<div class="t" style="left:1341.00px;top:462.36px;font-size:11.5px;color:#333;font-weight:bold;font-style:normal;">Einstellungen</div>
<div class="b" style="left:1319.00px;top:477.50px;width:18.00px;height:19.00px;background:#f0f0f0"></div>
<div class="b" style="left:1337.00px;top:495.50px;width:269.00px;height:1.00px;background:#f3f3f3"></div>
<div class="b" style="left:1462.00px;top:477.50px;width:1.00px;height:19.00px;background:#f0f0f0"></div>
<div class="t" style="left:1360.00px;top:481.36px;font-size:11.5px;color:#222;font-weight:normal;font-style:normal;">Als Digitaleingan...</div>
<div class="b" style="left:1319.00px;top:496.50px;width:288.00px;height:19.00px;background:#f0f0f0"></div>
<div class="t" style="left:1341.00px;top:500.36px;font-size:11.5px;color:#333;font-weight:bold;font-style:normal;">Logging/Mail/Call/Track</div>
<div class="b" style="left:1319.00px;top:515.50px;width:288.00px;height:19.00px;background:#f0f0f0"></div>
<div class="t" style="left:1341.00px;top:519.36px;font-size:11.5px;color:#333;font-weight:bold;font-style:normal;">Anzeige</div>
<div class="b" style="left:1319.00px;top:534.50px;width:18.00px;height:19.00px;background:#f0f0f0"></div>
<div class="b" style="left:1337.00px;top:552.50px;width:269.00px;height:1.00px;background:#f3f3f3"></div>
<div class="b" style="left:1462.00px;top:534.50px;width:1.00px;height:19.00px;background:#f0f0f0"></div>
<div class="t" style="left:1341.00px;top:538.36px;font-size:11.5px;color:#222;font-weight:normal;font-style:normal;">Eingabetype</div>
<div class="t" style="left:1469.50px;top:538.36px;font-size:11.5px;color:#222;font-weight:normal;font-style:normal;">Taste</div>
<div class="b" style="left:1319.00px;top:553.50px;width:18.00px;height:19.00px;background:#f0f0f0"></div>
<div class="b" style="left:1337.00px;top:571.50px;width:269.00px;height:1.00px;background:#f3f3f3"></div>
<div class="b" style="left:1462.00px;top:553.50px;width:1.00px;height:19.00px;background:#f0f0f0"></div>
<div class="t" style="left:1360.00px;top:557.36px;font-size:11.5px;color:#222;font-weight:normal;font-style:normal;">nur Statusanzeige</div>
<div class="b" style="left:1319.00px;top:572.50px;width:288.00px;height:19.00px;background:#f0f0f0"></div>
<div class="t" style="left:1341.00px;top:576.36px;font-size:11.5px;color:#333;font-weight:bold;font-style:normal;">Simulation/LiveView</div>
<svg width="3272" height="1062"><rect x="1323.5" y="159.0" width="8.5" height="8.5" fill="#fff" stroke="#444" stroke-width="1"/><path d="M1325.5,163.2 L1330,163.2" stroke="#222" stroke-width="1"/><path d="M1338.5,265.5 L1338.5,252.5 L1352,252.5" fill="none" stroke="#555" stroke-width="1.2"/><rect x="1323.5" y="349.0" width="8.5" height="8.5" fill="#fff" stroke="#444" stroke-width="1"/><path d="M1325.5,353.2 L1330,353.2" stroke="#222" stroke-width="1"/><path d="M1338.5,379.5 L1338.5,366.5 L1352,366.5" fill="none" stroke="#555" stroke-width="1.2"/><path d="M1341,372.5 L1344,375.5 L1349,369.5" fill="none" stroke="#222" stroke-width="1.3"/><path d="M1338.5,398.5 L1338.5,385.5 L1352,385.5" fill="none" stroke="#555" stroke-width="1.2"/><polygon points="1476.30,406.20 1477.77,409.78 1481.63,410.07 1478.68,412.57 1479.59,416.33 1476.30,414.30 1473.01,416.33 1473.92,412.57 1470.97,410.07 1474.83,409.78" fill="#fbfbf2" stroke="#8a8a7e" stroke-width="1.5" stroke-linejoin="miter"/><polygon points="1491.32,406.20 1492.79,409.78 1496.65,410.07 1493.70,412.57 1494.61,416.33 1491.32,414.30 1488.03,416.33 1488.94,412.57 1485.99,410.07 1489.85,409.78" fill="#fbfbf2" stroke="#8a8a7e" stroke-width="1.5" stroke-linejoin="miter"/><polygon points="1506.34,406.20 1507.81,409.78 1511.67,410.07 1508.72,412.57 1509.63,416.33 1506.34,414.30 1503.05,416.33 1503.96,412.57 1501.01,410.07 1504.87,409.78" fill="#fbfbf2" stroke="#8a8a7e" stroke-width="1.5" stroke-linejoin="miter"/><polygon points="1521.36,406.20 1522.83,409.78 1526.69,410.07 1523.74,412.57 1524.65,416.33 1521.36,414.30 1518.07,416.33 1518.98,412.57 1516.03,410.07 1519.89,409.78" fill="#fbfbf2" stroke="#8a8a7e" stroke-width="1.5" stroke-linejoin="miter"/><polygon points="1536.38,406.20 1537.85,409.78 1541.71,410.07 1538.76,412.57 1539.67,416.33 1536.38,414.30 1533.09,416.33 1534.00,412.57 1531.05,410.07 1534.91,409.78" fill="#fbfbf2" stroke="#8a8a7e" stroke-width="1.5" stroke-linejoin="miter"/><polygon points="1551.40,406.20 1552.87,409.78 1556.73,410.07 1553.78,412.57 1554.69,416.33 1551.40,414.30 1548.11,416.33 1549.02,412.57 1546.07,410.07 1549.93,409.78" fill="#fbfbf2" stroke="#8a8a7e" stroke-width="1.5" stroke-linejoin="miter"/><polygon points="1566.42,406.20 1567.89,409.78 1571.75,410.07 1568.80,412.57 1569.71,416.33 1566.42,414.30 1563.13,416.33 1564.04,412.57 1561.09,410.07 1564.95,409.78" fill="#fbfbf2" stroke="#8a8a7e" stroke-width="1.5" stroke-linejoin="miter"/><polygon points="1581.44,406.20 1582.91,409.78 1586.77,410.07 1583.82,412.57 1584.73,416.33 1581.44,414.30 1578.15,416.33 1579.06,412.57 1576.11,410.07 1579.97,409.78" fill="#fbfbf2" stroke="#8a8a7e" stroke-width="1.5" stroke-linejoin="miter"/><polygon points="1596.46,406.20 1597.93,409.78 1601.79,410.07 1598.84,412.57 1599.75,416.33 1596.46,414.30 1593.17,416.33 1594.08,412.57 1591.13,410.07 1594.99,409.78" fill="#fbfbf2" stroke="#8a8a7e" stroke-width="1.5" stroke-linejoin="miter"/><path d="M1338.5,436.5 L1338.5,423.5 L1352,423.5" fill="none" stroke="#555" stroke-width="1.2"/><rect x="1323.5" y="463.0" width="8.5" height="8.5" fill="#fff" stroke="#444" stroke-width="1"/><path d="M1325.5,467.2 L1330,467.2" stroke="#222" stroke-width="1"/><path d="M1338.5,493.5 L1338.5,480.5 L1352,480.5" fill="none" stroke="#555" stroke-width="1.2"/><path d="M1341,486.5 L1344,489.5 L1349,483.5" fill="none" stroke="#222" stroke-width="1.3"/><rect x="1323.5" y="501.0" width="8.5" height="8.5" fill="#fff" stroke="#444" stroke-width="1"/><path d="M1325.5,505.2 L1330,505.2" stroke="#222" stroke-width="1"/><path d="M1327.75,503.0 L1327.75,507.5" stroke="#222" stroke-width="1"/><rect x="1323.5" y="520.0" width="8.5" height="8.5" fill="#fff" stroke="#444" stroke-width="1"/><path d="M1325.5,524.2 L1330,524.2" stroke="#222" stroke-width="1"/><path d="M1338.5,569.5 L1338.5,556.5 L1352,556.5" fill="none" stroke="#555" stroke-width="1.2"/><rect x="1323.5" y="577.0" width="8.5" height="8.5" fill="#fff" stroke="#444" stroke-width="1"/><path d="M1325.5,581.2 L1330,581.2" stroke="#222" stroke-width="1"/><path d="M1327.75,579.0 L1327.75,583.5" stroke="#222" stroke-width="1"/></svg>
<div class="b" style="left:1606.00px;top:111.50px;width:7.00px;height:951.00px;background:#f0f0f0"></div>
<div class="t" style="left:1614.40px;top:116.06px;font-size:11.5px;color:#333;font-weight:normal;font-style:normal;">Peripherie</div>
<svg width="3272" height="1062"><path d="M2169.5,118.5 L2175.5,118.5 M2170.5,118.5 L2170.5,123.5 M2174.5,118.5 L2174.5,123.5 M2168.5,123.5 L2176.5,123.5 M2172.5,123.5 L2172.5,126.5" stroke="#222" stroke-width="1.4" fill="none"/></svg>
<div class="b" style="left:1613.00px;top:133.00px;width:567.00px;height:20.00px;background:#fff;border-bottom:1.5px solid #6a6a6a"></div>
<svg width="3272" height="1062"><path d="M1614,136 L1628,136 L1623,143 L1623,149.5 L1619.5,147 L1619.5,143 Z" fill="#777"/><circle cx="2153" cy="143" r="6.8" fill="#c8c8c8"/><path d="M2150,140 L2156,146 M2156,140 L2150,146" stroke="#fff" stroke-width="1.6"/><path d="M2164.5,141 L2175,141 L2169.75,147 Z" fill="#666"/></svg>
<div class="t" style="left:1632.40px;top:136.78px;font-size:11.6px;color:#888;font-weight:normal;font-style:italic;">Filtern mit (STRG + F)</div>
<div class="b" style="left:1613.00px;top:153.00px;width:550.00px;height:909.00px;background:#fff"></div>
<div class="b" style="left:2163.00px;top:153.00px;width:19.00px;height:909.00px;background:#f0f0f0"></div>
<div class="b" style="left:2163.00px;top:625.00px;width:15.00px;height:437.00px;background:#c8c8c8"></div>
<svg width="3272" height="1062"><rect x="2143" y="158.5" width="16" height="15.5" rx="1.5" fill="#6e6e6e"/><rect x="2146" y="164.8" width="10" height="3" fill="#fff"/><path d="M2166.5,167.5 L2170.3,163.5 L2174,167.5" fill="none" stroke="#333" stroke-width="1.6"/></svg>
<div class="b" style="left:2182.00px;top:111.50px;width:7.00px;height:951.00px;background:#f0f0f0"></div>
<div class="b" style="left:1714.00px;top:1013.50px;width:447.00px;height:20.50px;background:#f0f0f0"></div>
<div class="b" style="left:1904.00px;top:1019.50px;width:62.00px;height:15.50px;background:#f4f01a;border-radius:2px"></div>
<div class="b" style="left:1890.00px;top:1040.00px;width:66.50px;height:18.00px;background:#f4f01a;border-radius:2px"></div>
<div class="t" style="left:1714.40px;top:159.55px;font-size:13.4px;color:#333;font-weight:normal;font-style:normal;">_miele_000103383082_ProgramPhase (VI)</div>
<div class="t" style="left:1714.40px;top:181.58px;font-size:13.4px;color:#333;font-weight:normal;font-style:normal;">_miele_000103383082_ProgramStatus (VI)</div>
<div class="t" style="left:1714.40px;top:203.61px;font-size:13.4px;color:#333;font-weight:normal;font-style:normal;">_miele_000103383082_TimeLeft (VI)</div>
<div class="t" style="left:1714.40px;top:225.64px;font-size:13.4px;color:#333;font-weight:normal;font-style:normal;">_miele_000103383082_TimeRunning (VI)</div>
<div class="t" style="left:1714.40px;top:247.67px;font-size:13.4px;color:#333;font-weight:normal;font-style:normal;">_miele_000103383082_ProgramType (VI)</div>
<div class="t" style="left:1714.40px;top:269.70px;font-size:13.4px;color:#333;font-weight:normal;font-style:normal;">knx_dstgad (VI)</div>
<div class="t" style="left:1714.40px;top:291.73px;font-size:13.4px;color:#333;font-weight:normal;font-style:normal;">knx_value (VI)</div>
<div class="t" style="left:1714.40px;top:313.76px;font-size:13.4px;color:#333;font-weight:normal;font-style:normal;">Loxberry Fritzbox Steckdose Keller (VI)</div>
<div class="t" style="left:1714.40px;top:335.79px;font-size:13.4px;color:#333;font-weight:normal;font-style:normal;">Loxberry Fritzbox Steckdose Vorhaus (VI)</div>
<div class="t" style="left:1714.40px;top:357.82px;font-size:13.4px;color:#333;font-weight:normal;font-style:normal;">1W_28FF9B47601703_TEMP (VI) (Zentral, Innentemperatur)</div>
<div class="t" style="left:1714.40px;top:379.85px;font-size:13.4px;color:#333;font-weight:normal;font-style:normal;">fhem_WP_BetrStundenKompressor (VI) (Technikraum, Heizung)</div>
<div class="t" style="left:1714.40px;top:401.88px;font-size:13.4px;color:#333;font-weight:normal;font-style:normal;">fhem_WP_Display-Zeile-1 (VI) (Technikraum, Heizung)</div>
<div class="t" style="left:1714.40px;top:423.91px;font-size:13.4px;color:#333;font-weight:normal;font-style:normal;">fhem_WP_Display-Zeile-2 (VI) (Technikraum, Heizung)</div>
<div class="t" style="left:1714.40px;top:445.94px;font-size:13.4px;color:#333;font-weight:normal;font-style:normal;">fhem_WP_Druck-Kondensator (VI) (Technikraum, Heizung)</div>
<div class="t" style="left:1714.40px;top:467.97px;font-size:13.4px;color:#333;font-weight:normal;font-style:normal;">fhem_WP_Druck-Verdampfer (VI) (Technikraum, Heizung)</div>
<div class="t" style="left:1714.40px;top:490.00px;font-size:13.4px;color:#333;font-weight:normal;font-style:normal;">fhem_WP_Status-Gesamt (VI) (Technikraum, Heizung)</div>
<div class="t" style="left:1714.40px;top:512.03px;font-size:13.4px;color:#333;font-weight:normal;font-style:normal;">fhem_WP_Temp-Aussen (VI) (Technikraum, Heizung)</div>
<div class="t" style="left:1714.40px;top:534.06px;font-size:13.4px;color:#333;font-weight:normal;font-style:normal;">fhem_WP_Temp-Kondensator (VI) (Technikraum, Heizung)</div>
<div class="t" style="left:1714.40px;top:556.09px;font-size:13.4px;color:#333;font-weight:normal;font-style:normal;">fhem_WP_Temp-Ruecklauf (VI) (Technikraum, Heizung)</div>
<div class="t" style="left:1714.40px;top:578.12px;font-size:13.4px;color:#333;font-weight:normal;font-style:normal;">fhem_WP_Temp-Saugleitung (VI) (Technikraum, Heizung)</div>
<div class="t" style="left:1714.40px;top:600.15px;font-size:13.4px;color:#333;font-weight:normal;font-style:normal;">fhem_WP_Temp-Verdampfer (VI) (Technikraum, Heizung)</div>
<div class="t" style="left:1714.40px;top:622.18px;font-size:13.4px;color:#333;font-weight:normal;font-style:normal;">fhem_WP_Temp-Vorlauf (VI) (Technikraum, Heizung)</div>
<div class="t" style="left:1714.40px;top:644.21px;font-size:13.4px;color:#333;font-weight:normal;font-style:normal;">Fritzbox Wlan Scanner (VI)</div>
<div class="t" style="left:1714.40px;top:666.24px;font-size:13.4px;color:#333;font-weight:normal;font-style:normal;">Loxberry3B+ OneWire Status (VI)</div>
<div class="t" style="left:1714.40px;top:688.27px;font-size:13.4px;color:#333;font-weight:normal;font-style:normal;">Loxberry Eingang 0 (VI) (Zentral, Bedienelemente)</div>
<div class="t" style="left:1714.40px;top:710.30px;font-size:13.4px;color:#333;font-weight:normal;font-style:normal;">Loxberry Eingang 1 (VI) (Zentral, Bedienelemente)</div>
<div class="t" style="left:1714.40px;top:732.33px;font-size:13.4px;color:#333;font-weight:normal;font-style:normal;">Loxberry Eingang 2 (VI) (Zentral, Bedienelemente)</div>
<div class="t" style="left:1714.40px;top:754.36px;font-size:13.4px;color:#333;font-weight:normal;font-style:normal;">Loxberry Eingang 3 (VI) (Zentral, Bedienelemente)</div>
<div class="t" style="left:1714.40px;top:776.39px;font-size:13.4px;color:#333;font-weight:normal;font-style:normal;">Loxberry Eingang 4 (VI) (Zentral, Bedienelemente)</div>
<div class="t" style="left:1714.40px;top:798.42px;font-size:13.4px;color:#333;font-weight:normal;font-style:normal;">Loxberry Eingang 5 (VI) (Zentral, Bedienelemente)</div>
<div class="t" style="left:1714.40px;top:820.45px;font-size:13.4px;color:#333;font-weight:normal;font-style:normal;">Loxberry Eingang 6 (VI) (Zentral, Bedienelemente)</div>
<div class="t" style="left:1714.40px;top:842.48px;font-size:13.4px;color:#333;font-weight:normal;font-style:normal;">Loxberry Eingang 7 (VI) (Zentral, Bedienelemente)</div>
<div class="t" style="left:1714.40px;top:864.51px;font-size:13.4px;color:#333;font-weight:normal;font-style:normal;">PV - Forecast (VI)</div>
<div class="t" style="left:1714.40px;top:886.54px;font-size:13.4px;color:#333;font-weight:normal;font-style:normal;">robonect_mower_battery_charge (VI) (Außenbereich, Shaun)</div>
<div class="t" style="left:1714.40px;top:908.57px;font-size:13.4px;color:#333;font-weight:normal;font-style:normal;">robonect_mower_mode (VI) (Außenbereich, Shaun)</div>
<div class="t" style="left:1714.40px;top:930.60px;font-size:13.4px;color:#333;font-weight:normal;font-style:normal;">robonect_mower_statistic_hours (VI) (Außenbereich, Shaun)</div>
<div class="t" style="left:1714.40px;top:952.63px;font-size:13.4px;color:#333;font-weight:normal;font-style:normal;">robonect_mower_status (VI) (Außenbereich, Shaun)</div>
<div class="t" style="left:1714.40px;top:974.66px;font-size:13.4px;color:#333;font-weight:normal;font-style:normal;">robonect_wlan_rssi (VI) (Außenbereich, Shaun)</div>
<div class="t" style="left:1714.40px;top:996.69px;font-size:13.4px;color:#333;font-weight:normal;font-style:normal;">shellies_shelly1-32CA7F_relay_0 (VI) (Test, Bedienelemente)</div>
<div class="t" style="left:1714.40px;top:1018.55px;font-size:13.6px;color:#111;font-weight:bold;font-style:normal;">shellies_shellyswitch-32B94D_input_0 (VI) (Test, Bedienelemente)</div>
<div class="t" style="left:1714.40px;top:1040.75px;font-size:13.4px;color:#333;font-weight:normal;font-style:normal;">shellies_shellyswitch-32B94D_input_1 (VI) (Test, Bedienelemente)</div>
<svg width="3272" height="1062"><line x1="1661.5" y1="153" x2="1661.5" y2="1062" stroke="#555" stroke-width="1" stroke-dasharray="1,2"/><line x1="1681.5" y1="153" x2="1681.5" y2="1062" stroke="#555" stroke-width="1" stroke-dasharray="1,2"/><rect x="1677.5" y="161.3" width="8.5" height="8.5" fill="#fff" stroke="#555" stroke-width="1"/><path d="M1679.5,165.6 L1684,165.6 M1681.75,163.3 L1681.75,167.8" stroke="#111" stroke-width="1.1"/><line x1="1687" y1="165.8" x2="1693" y2="165.8" stroke="#666" stroke-dasharray="1,2"/><rect x="1694" y="160.3" width="14" height="11" fill="#6da42a"/><path d="M1697,164.8 L1701,164.8 L1701,162.3 L1705,165.8 L1701,169.3 L1701,166.8 L1697,166.8 Z" fill="#e6f0d2"/><rect x="1677.5" y="183.3" width="8.5" height="8.5" fill="#fff" stroke="#555" stroke-width="1"/><path d="M1679.5,187.6 L1684,187.6 M1681.75,185.3 L1681.75,189.8" stroke="#111" stroke-width="1.1"/><line x1="1687" y1="187.8" x2="1693" y2="187.8" stroke="#666" stroke-dasharray="1,2"/><rect x="1694" y="182.3" width="14" height="11" fill="#6da42a"/><path d="M1697,186.8 L1701,186.8 L1701,184.3 L1705,187.8 L1701,191.3 L1701,188.8 L1697,188.8 Z" fill="#e6f0d2"/><rect x="1677.5" y="205.4" width="8.5" height="8.5" fill="#fff" stroke="#555" stroke-width="1"/><path d="M1679.5,209.6 L1684,209.6 M1681.75,207.4 L1681.75,211.9" stroke="#111" stroke-width="1.1"/><line x1="1687" y1="209.9" x2="1693" y2="209.9" stroke="#666" stroke-dasharray="1,2"/><rect x="1694" y="204.4" width="14" height="11" fill="#6da42a"/><path d="M1697,208.9 L1701,208.9 L1701,206.4 L1705,209.9 L1701,213.4 L1701,210.9 L1697,210.9 Z" fill="#e6f0d2"/><rect x="1677.5" y="227.4" width="8.5" height="8.5" fill="#fff" stroke="#555" stroke-width="1"/><path d="M1679.5,231.6 L1684,231.6 M1681.75,229.4 L1681.75,233.9" stroke="#111" stroke-width="1.1"/><line x1="1687" y1="231.9" x2="1693" y2="231.9" stroke="#666" stroke-dasharray="1,2"/><rect x="1694" y="226.4" width="14" height="11" fill="#6da42a"/><path d="M1697,230.9 L1701,230.9 L1701,228.4 L1705,231.9 L1701,235.4 L1701,232.9 L1697,232.9 Z" fill="#e6f0d2"/><rect x="1677.5" y="249.4" width="8.5" height="8.5" fill="#fff" stroke="#555" stroke-width="1"/><path d="M1679.5,253.7 L1684,253.7 M1681.75,251.4 L1681.75,255.9" stroke="#111" stroke-width="1.1"/><line x1="1687" y1="253.9" x2="1693" y2="253.9" stroke="#666" stroke-dasharray="1,2"/><rect x="1694" y="248.4" width="14" height="11" fill="#6da42a"/><path d="M1697,252.9 L1701,252.9 L1701,250.4 L1705,253.9 L1701,257.4 L1701,254.9 L1697,254.9 Z" fill="#e6f0d2"/><rect x="1677.5" y="271.5" width="8.5" height="8.5" fill="#fff" stroke="#555" stroke-width="1"/><path d="M1679.5,275.7 L1684,275.7 M1681.75,273.5 L1681.75,278.0" stroke="#111" stroke-width="1.1"/><line x1="1687" y1="276.0" x2="1693" y2="276.0" stroke="#666" stroke-dasharray="1,2"/><rect x="1694" y="270.5" width="14" height="11" fill="#6da42a"/><path d="M1697,275.0 L1701,275.0 L1701,272.5 L1705,276.0 L1701,279.5 L1701,277.0 L1697,277.0 Z" fill="#e6f0d2"/><rect x="1677.5" y="293.5" width="8.5" height="8.5" fill="#fff" stroke="#555" stroke-width="1"/><path d="M1679.5,297.7 L1684,297.7 M1681.75,295.5 L1681.75,300.0" stroke="#111" stroke-width="1.1"/><line x1="1687" y1="298.0" x2="1693" y2="298.0" stroke="#666" stroke-dasharray="1,2"/><rect x="1694" y="292.5" width="14" height="11" fill="#6da42a"/><path d="M1697,297.0 L1701,297.0 L1701,294.5 L1705,298.0 L1701,301.5 L1701,299.0 L1697,299.0 Z" fill="#e6f0d2"/><rect x="1677.5" y="315.5" width="8.5" height="8.5" fill="#fff" stroke="#555" stroke-width="1"/><path d="M1679.5,319.8 L1684,319.8 M1681.75,317.5 L1681.75,322.0" stroke="#111" stroke-width="1.1"/><line x1="1687" y1="320.0" x2="1693" y2="320.0" stroke="#666" stroke-dasharray="1,2"/><rect x="1694" y="314.5" width="14" height="11" fill="#333"/><path d="M1697,319.0 L1701,319.0 L1701,316.5 L1705,320.0 L1701,323.5 L1701,321.0 L1697,321.0 Z" fill="#f0a030"/><rect x="1677.5" y="337.5" width="8.5" height="8.5" fill="#fff" stroke="#555" stroke-width="1"/><path d="M1679.5,341.8 L1684,341.8 M1681.75,339.5 L1681.75,344.0" stroke="#111" stroke-width="1.1"/><line x1="1687" y1="342.0" x2="1693" y2="342.0" stroke="#666" stroke-dasharray="1,2"/><rect x="1694" y="336.5" width="14" height="11" fill="#333"/><path d="M1697,341.0 L1701,341.0 L1701,338.5 L1705,342.0 L1701,345.5 L1701,343.0 L1697,343.0 Z" fill="#f0a030"/><rect x="1677.5" y="359.6" width="8.5" height="8.5" fill="#fff" stroke="#555" stroke-width="1"/><path d="M1679.5,363.8 L1684,363.8 M1681.75,361.6 L1681.75,366.1" stroke="#111" stroke-width="1.1"/><line x1="1687" y1="364.1" x2="1693" y2="364.1" stroke="#666" stroke-dasharray="1,2"/><rect x="1694" y="358.6" width="14" height="11" fill="#6da42a"/><path d="M1697,363.1 L1701,363.1 L1701,360.6 L1705,364.1 L1701,367.6 L1701,365.1 L1697,365.1 Z" fill="#e6f0d2"/><rect x="1677.5" y="381.6" width="8.5" height="8.5" fill="#fff" stroke="#555" stroke-width="1"/><path d="M1679.5,385.9 L1684,385.9 M1681.75,383.6 L1681.75,388.1" stroke="#111" stroke-width="1.1"/><line x1="1687" y1="386.1" x2="1693" y2="386.1" stroke="#666" stroke-dasharray="1,2"/><rect x="1694" y="380.6" width="14" height="11" fill="#6da42a"/><path d="M1697,385.1 L1701,385.1 L1701,382.6 L1705,386.1 L1701,389.6 L1701,387.1 L1697,387.1 Z" fill="#e6f0d2"/><rect x="1677.5" y="403.6" width="8.5" height="8.5" fill="#fff" stroke="#555" stroke-width="1"/><path d="M1679.5,407.9 L1684,407.9 M1681.75,405.6 L1681.75,410.1" stroke="#111" stroke-width="1.1"/><line x1="1687" y1="408.1" x2="1693" y2="408.1" stroke="#666" stroke-dasharray="1,2"/><rect x="1694" y="402.6" width="14" height="11" fill="#6da42a"/><path d="M1697,407.1 L1701,407.1 L1701,404.6 L1705,408.1 L1701,411.6 L1701,409.1 L1697,409.1 Z" fill="#e6f0d2"/><rect x="1677.5" y="425.7" width="8.5" height="8.5" fill="#fff" stroke="#555" stroke-width="1"/><path d="M1679.5,429.9 L1684,429.9 M1681.75,427.7 L1681.75,432.2" stroke="#111" stroke-width="1.1"/><line x1="1687" y1="430.2" x2="1693" y2="430.2" stroke="#666" stroke-dasharray="1,2"/><rect x="1694" y="424.7" width="14" height="11" fill="#6da42a"/><path d="M1697,429.2 L1701,429.2 L1701,426.7 L1705,430.2 L1701,433.7 L1701,431.2 L1697,431.2 Z" fill="#e6f0d2"/><rect x="1677.5" y="447.7" width="8.5" height="8.5" fill="#fff" stroke="#555" stroke-width="1"/><path d="M1679.5,451.9 L1684,451.9 M1681.75,449.7 L1681.75,454.2" stroke="#111" stroke-width="1.1"/><line x1="1687" y1="452.2" x2="1693" y2="452.2" stroke="#666" stroke-dasharray="1,2"/><rect x="1694" y="446.7" width="14" height="11" fill="#6da42a"/><path d="M1697,451.2 L1701,451.2 L1701,448.7 L1705,452.2 L1701,455.7 L1701,453.2 L1697,453.2 Z" fill="#e6f0d2"/><rect x="1677.5" y="469.7" width="8.5" height="8.5" fill="#fff" stroke="#555" stroke-width="1"/><path d="M1679.5,474.0 L1684,474.0 M1681.75,471.7 L1681.75,476.2" stroke="#111" stroke-width="1.1"/><line x1="1687" y1="474.2" x2="1693" y2="474.2" stroke="#666" stroke-dasharray="1,2"/><rect x="1694" y="468.7" width="14" height="11" fill="#6da42a"/><path d="M1697,473.2 L1701,473.2 L1701,470.7 L1705,474.2 L1701,477.7 L1701,475.2 L1697,475.2 Z" fill="#e6f0d2"/><rect x="1677.5" y="491.8" width="8.5" height="8.5" fill="#fff" stroke="#555" stroke-width="1"/><path d="M1679.5,496.0 L1684,496.0 M1681.75,493.8 L1681.75,498.3" stroke="#111" stroke-width="1.1"/><line x1="1687" y1="496.3" x2="1693" y2="496.3" stroke="#666" stroke-dasharray="1,2"/><rect x="1694" y="490.8" width="14" height="11" fill="#6da42a"/><path d="M1697,495.3 L1701,495.3 L1701,492.8 L1705,496.3 L1701,499.8 L1701,497.3 L1697,497.3 Z" fill="#e6f0d2"/><rect x="1677.5" y="513.8" width="8.5" height="8.5" fill="#fff" stroke="#555" stroke-width="1"/><path d="M1679.5,518.0 L1684,518.0 M1681.75,515.8 L1681.75,520.3" stroke="#111" stroke-width="1.1"/><line x1="1687" y1="518.3" x2="1693" y2="518.3" stroke="#666" stroke-dasharray="1,2"/><rect x="1694" y="512.8" width="14" height="11" fill="#6da42a"/><path d="M1697,517.3 L1701,517.3 L1701,514.8 L1705,518.3 L1701,521.8 L1701,519.3 L1697,519.3 Z" fill="#e6f0d2"/><rect x="1677.5" y="535.8" width="8.5" height="8.5" fill="#fff" stroke="#555" stroke-width="1"/><path d="M1679.5,540.1 L1684,540.1 M1681.75,537.8 L1681.75,542.3" stroke="#111" stroke-width="1.1"/><line x1="1687" y1="540.3" x2="1693" y2="540.3" stroke="#666" stroke-dasharray="1,2"/><rect x="1694" y="534.8" width="14" height="11" fill="#6da42a"/><path d="M1697,539.3 L1701,539.3 L1701,536.8 L1705,540.3 L1701,543.8 L1701,541.3 L1697,541.3 Z" fill="#e6f0d2"/><rect x="1677.5" y="557.8" width="8.5" height="8.5" fill="#fff" stroke="#555" stroke-width="1"/><path d="M1679.5,562.1 L1684,562.1 M1681.75,559.8 L1681.75,564.3" stroke="#111" stroke-width="1.1"/><line x1="1687" y1="562.3" x2="1693" y2="562.3" stroke="#666" stroke-dasharray="1,2"/><rect x="1694" y="556.8" width="14" height="11" fill="#6da42a"/><path d="M1697,561.3 L1701,561.3 L1701,558.8 L1705,562.3 L1701,565.8 L1701,563.3 L1697,563.3 Z" fill="#e6f0d2"/><rect x="1677.5" y="579.9" width="8.5" height="8.5" fill="#fff" stroke="#555" stroke-width="1"/><path d="M1679.5,584.1 L1684,584.1 M1681.75,581.9 L1681.75,586.4" stroke="#111" stroke-width="1.1"/><line x1="1687" y1="584.4" x2="1693" y2="584.4" stroke="#666" stroke-dasharray="1,2"/><rect x="1694" y="578.9" width="14" height="11" fill="#6da42a"/><path d="M1697,583.4 L1701,583.4 L1701,580.9 L1705,584.4 L1701,587.9 L1701,585.4 L1697,585.4 Z" fill="#e6f0d2"/><rect x="1677.5" y="601.9" width="8.5" height="8.5" fill="#fff" stroke="#555" stroke-width="1"/><path d="M1679.5,606.2 L1684,606.2 M1681.75,603.9 L1681.75,608.4" stroke="#111" stroke-width="1.1"/><line x1="1687" y1="606.4" x2="1693" y2="606.4" stroke="#666" stroke-dasharray="1,2"/><rect x="1694" y="600.9" width="14" height="11" fill="#6da42a"/><path d="M1697,605.4 L1701,605.4 L1701,602.9 L1705,606.4 L1701,609.9 L1701,607.4 L1697,607.4 Z" fill="#e6f0d2"/><rect x="1677.5" y="623.9" width="8.5" height="8.5" fill="#fff" stroke="#555" stroke-width="1"/><path d="M1679.5,628.2 L1684,628.2 M1681.75,625.9 L1681.75,630.4" stroke="#111" stroke-width="1.1"/><line x1="1687" y1="628.4" x2="1693" y2="628.4" stroke="#666" stroke-dasharray="1,2"/><rect x="1694" y="622.9" width="14" height="11" fill="#6da42a"/><path d="M1697,627.4 L1701,627.4 L1701,624.9 L1705,628.4 L1701,631.9 L1701,629.4 L1697,629.4 Z" fill="#e6f0d2"/><rect x="1677.5" y="646.0" width="8.5" height="8.5" fill="#fff" stroke="#555" stroke-width="1"/><path d="M1679.5,650.2 L1684,650.2 M1681.75,648.0 L1681.75,652.5" stroke="#111" stroke-width="1.1"/><line x1="1687" y1="650.5" x2="1693" y2="650.5" stroke="#666" stroke-dasharray="1,2"/><rect x="1694" y="645.0" width="14" height="11" fill="#333"/><path d="M1697,649.5 L1701,649.5 L1701,647.0 L1705,650.5 L1701,654.0 L1701,651.5 L1697,651.5 Z" fill="#42a5e8"/><rect x="1677.5" y="668.0" width="8.5" height="8.5" fill="#fff" stroke="#555" stroke-width="1"/><path d="M1679.5,672.2 L1684,672.2 M1681.75,670.0 L1681.75,674.5" stroke="#111" stroke-width="1.1"/><line x1="1687" y1="672.5" x2="1693" y2="672.5" stroke="#666" stroke-dasharray="1,2"/><rect x="1694" y="667.0" width="14" height="11" fill="#333"/><path d="M1697,671.5 L1701,671.5 L1701,669.0 L1705,672.5 L1701,676.0 L1701,673.5 L1697,673.5 Z" fill="#42a5e8"/><rect x="1677.5" y="690.0" width="8.5" height="8.5" fill="#fff" stroke="#555" stroke-width="1"/><path d="M1679.5,694.3 L1684,694.3 M1681.75,692.0 L1681.75,696.5" stroke="#111" stroke-width="1.1"/><line x1="1687" y1="694.5" x2="1693" y2="694.5" stroke="#666" stroke-dasharray="1,2"/><rect x="1694" y="689.0" width="14" height="11" fill="#6da42a"/><path d="M1697,693.5 L1701,693.5 L1701,691.0 L1705,694.5 L1701,698.0 L1701,695.5 L1697,695.5 Z" fill="#e6f0d2"/><rect x="1677.5" y="712.0" width="8.5" height="8.5" fill="#fff" stroke="#555" stroke-width="1"/><path d="M1679.5,716.3 L1684,716.3 M1681.75,714.0 L1681.75,718.5" stroke="#111" stroke-width="1.1"/><line x1="1687" y1="716.5" x2="1693" y2="716.5" stroke="#666" stroke-dasharray="1,2"/><rect x="1694" y="711.0" width="14" height="11" fill="#6da42a"/><path d="M1697,715.5 L1701,715.5 L1701,713.0 L1705,716.5 L1701,720.0 L1701,717.5 L1697,717.5 Z" fill="#e6f0d2"/><rect x="1677.5" y="734.1" width="8.5" height="8.5" fill="#fff" stroke="#555" stroke-width="1"/><path d="M1679.5,738.3 L1684,738.3 M1681.75,736.1 L1681.75,740.6" stroke="#111" stroke-width="1.1"/><line x1="1687" y1="738.6" x2="1693" y2="738.6" stroke="#666" stroke-dasharray="1,2"/><rect x="1694" y="733.1" width="14" height="11" fill="#6da42a"/><path d="M1697,737.6 L1701,737.6 L1701,735.1 L1705,738.6 L1701,742.1 L1701,739.6 L1697,739.6 Z" fill="#e6f0d2"/><rect x="1677.5" y="756.1" width="8.5" height="8.5" fill="#fff" stroke="#555" stroke-width="1"/><path d="M1679.5,760.4 L1684,760.4 M1681.75,758.1 L1681.75,762.6" stroke="#111" stroke-width="1.1"/><line x1="1687" y1="760.6" x2="1693" y2="760.6" stroke="#666" stroke-dasharray="1,2"/><rect x="1694" y="755.1" width="14" height="11" fill="#6da42a"/><path d="M1697,759.6 L1701,759.6 L1701,757.1 L1705,760.6 L1701,764.1 L1701,761.6 L1697,761.6 Z" fill="#e6f0d2"/><line x1="1682" y1="782.6" x2="1693" y2="782.6" stroke="#666" stroke-dasharray="1,2"/><rect x="1694" y="777.1" width="14" height="11" fill="#6da42a"/><path d="M1697,781.6 L1701,781.6 L1701,779.1 L1705,782.6 L1701,786.1 L1701,783.6 L1697,783.6 Z" fill="#e6f0d2"/><line x1="1682" y1="804.7" x2="1693" y2="804.7" stroke="#666" stroke-dasharray="1,2"/><rect x="1694" y="799.2" width="14" height="11" fill="#6da42a"/><path d="M1697,803.7 L1701,803.7 L1701,801.2 L1705,804.7 L1701,808.2 L1701,805.7 L1697,805.7 Z" fill="#e6f0d2"/><line x1="1682" y1="826.7" x2="1693" y2="826.7" stroke="#666" stroke-dasharray="1,2"/><rect x="1694" y="821.2" width="14" height="11" fill="#6da42a"/><path d="M1697,825.7 L1701,825.7 L1701,823.2 L1705,826.7 L1701,830.2 L1701,827.7 L1697,827.7 Z" fill="#e6f0d2"/><line x1="1682" y1="848.7" x2="1693" y2="848.7" stroke="#666" stroke-dasharray="1,2"/><rect x="1694" y="843.2" width="14" height="11" fill="#6da42a"/><path d="M1697,847.7 L1701,847.7 L1701,845.2 L1705,848.7 L1701,852.2 L1701,849.7 L1697,849.7 Z" fill="#e6f0d2"/><rect x="1677.5" y="866.3" width="8.5" height="8.5" fill="#fff" stroke="#555" stroke-width="1"/><path d="M1679.5,870.5 L1684,870.5 M1681.75,868.3 L1681.75,872.8" stroke="#111" stroke-width="1.1"/><line x1="1687" y1="870.8" x2="1693" y2="870.8" stroke="#666" stroke-dasharray="1,2"/><rect x="1694" y="865.3" width="14" height="11" fill="#333"/><path d="M1697,869.8 L1701,869.8 L1701,867.3 L1705,870.8 L1701,874.3 L1701,871.8 L1697,871.8 Z" fill="#42a5e8"/><rect x="1677.5" y="888.3" width="8.5" height="8.5" fill="#fff" stroke="#555" stroke-width="1"/><path d="M1679.5,892.5 L1684,892.5 M1681.75,890.3 L1681.75,894.8" stroke="#111" stroke-width="1.1"/><line x1="1687" y1="892.8" x2="1693" y2="892.8" stroke="#666" stroke-dasharray="1,2"/><rect x="1694" y="887.3" width="14" height="11" fill="#6da42a"/><path d="M1697,891.8 L1701,891.8 L1701,889.3 L1705,892.8 L1701,896.3 L1701,893.8 L1697,893.8 Z" fill="#e6f0d2"/><rect x="1677.5" y="910.3" width="8.5" height="8.5" fill="#fff" stroke="#555" stroke-width="1"/><path d="M1679.5,914.6 L1684,914.6 M1681.75,912.3 L1681.75,916.8" stroke="#111" stroke-width="1.1"/><line x1="1687" y1="914.8" x2="1693" y2="914.8" stroke="#666" stroke-dasharray="1,2"/><rect x="1694" y="909.3" width="14" height="11" fill="#6da42a"/><path d="M1697,913.8 L1701,913.8 L1701,911.3 L1705,914.8 L1701,918.3 L1701,915.8 L1697,915.8 Z" fill="#e6f0d2"/><rect x="1677.5" y="932.4" width="8.5" height="8.5" fill="#fff" stroke="#555" stroke-width="1"/><path d="M1679.5,936.6 L1684,936.6 M1681.75,934.4 L1681.75,938.9" stroke="#111" stroke-width="1.1"/><line x1="1687" y1="936.9" x2="1693" y2="936.9" stroke="#666" stroke-dasharray="1,2"/><rect x="1694" y="931.4" width="14" height="11" fill="#6da42a"/><path d="M1697,935.9 L1701,935.9 L1701,933.4 L1705,936.9 L1701,940.4 L1701,937.9 L1697,937.9 Z" fill="#e6f0d2"/><rect x="1677.5" y="954.4" width="8.5" height="8.5" fill="#fff" stroke="#555" stroke-width="1"/><path d="M1679.5,958.6 L1684,958.6 M1681.75,956.4 L1681.75,960.9" stroke="#111" stroke-width="1.1"/><line x1="1687" y1="958.9" x2="1693" y2="958.9" stroke="#666" stroke-dasharray="1,2"/><rect x="1694" y="953.4" width="14" height="11" fill="#6da42a"/><path d="M1697,957.9 L1701,957.9 L1701,955.4 L1705,958.9 L1701,962.4 L1701,959.9 L1697,959.9 Z" fill="#e6f0d2"/><rect x="1677.5" y="976.4" width="8.5" height="8.5" fill="#fff" stroke="#555" stroke-width="1"/><path d="M1679.5,980.7 L1684,980.7 M1681.75,978.4 L1681.75,982.9" stroke="#111" stroke-width="1.1"/><line x1="1687" y1="980.9" x2="1693" y2="980.9" stroke="#666" stroke-dasharray="1,2"/><rect x="1694" y="975.4" width="14" height="11" fill="#6da42a"/><path d="M1697,979.9 L1701,979.9 L1701,977.4 L1705,980.9 L1701,984.4 L1701,981.9 L1697,981.9 Z" fill="#e6f0d2"/><rect x="1677.5" y="998.4" width="8.5" height="8.5" fill="#fff" stroke="#555" stroke-width="1"/><path d="M1679.5,1002.7 L1684,1002.7 M1681.75,1000.4 L1681.75,1004.9" stroke="#111" stroke-width="1.1"/><line x1="1687" y1="1002.9" x2="1693" y2="1002.9" stroke="#666" stroke-dasharray="1,2"/><rect x="1694" y="997.4" width="14" height="11" fill="#6da42a"/><path d="M1697,1001.9 L1701,1001.9 L1701,999.4 L1705,1002.9 L1701,1006.4 L1701,1003.9 L1697,1003.9 Z" fill="#e6f0d2"/><rect x="1677.5" y="1020.5" width="8.5" height="8.5" fill="#fff" stroke="#555" stroke-width="1"/><path d="M1679.5,1024.7 L1684,1024.7 M1681.75,1022.5 L1681.75,1027.0" stroke="#111" stroke-width="1.1"/><line x1="1687" y1="1025.0" x2="1693" y2="1025.0" stroke="#666" stroke-dasharray="1,2"/><rect x="1694" y="1019.5" width="14" height="11" fill="#6da42a"/><path d="M1697,1024.0 L1701,1024.0 L1701,1021.5 L1705,1025.0 L1701,1028.5 L1701,1026.0 L1697,1026.0 Z" fill="#e6f0d2"/><rect x="1677.5" y="1042.5" width="8.5" height="8.5" fill="#fff" stroke="#555" stroke-width="1"/><path d="M1679.5,1046.8 L1684,1046.8 M1681.75,1044.5 L1681.75,1049.0" stroke="#111" stroke-width="1.1"/><line x1="1687" y1="1047.0" x2="1693" y2="1047.0" stroke="#666" stroke-dasharray="1,2"/><rect x="1694" y="1041.5" width="14" height="11" fill="#6da42a"/><path d="M1697,1046.0 L1701,1046.0 L1701,1043.5 L1705,1047.0 L1701,1050.5 L1701,1048.0 L1697,1048.0 Z" fill="#e6f0d2"/></svg>
<div class="b" style="left:2182.00px;top:111.50px;width:1090.00px;height:23.00px;background:#f3f3f3;border-top:1px solid #e2e2e2"></div>
<div class="b" style="left:2189.00px;top:130.50px;width:1083.00px;height:3.50px;background:#f4f4fa"></div>
<div class="b" style="left:2189.00px;top:134.00px;width:1083.00px;height:928.00px;background:#fff;border-left:3px solid #8a8a96;border-top:3px solid #8a8a96"></div>
<div class="b" style="left:2189.00px;top:134.00px;width:1083.00px;height:1.60px;background:#40404a"></div>
<div class="b" style="left:2189.00px;top:134.00px;width:1.60px;height:928.00px;background:#40404a"></div>
<svg width="3272" height="1062"><path d="M2192.6,133.5 L2208,116 L2309,116 L2309,133.5 Z" fill="#c7d7f0"/><path d="M2297,123 L2305,131 M2305,123 L2297,131" stroke="#222" stroke-width="1.3"/></svg>
<div class="t" style="left:2220.70px;top:116.98px;font-size:11.6px;color:#1a2030;font-weight:bold;font-style:normal;;transform:scaleX(0.9410);transform-origin:0 0">Smart Home</div>
<svg width="3272" height="1062"><path d="M2520.0,280.8 L2606.0,280.8" fill="none" stroke="#333333" stroke-width="1.3"/><path d="M2909.0,260.4 L2982.0,260.4" fill="none" stroke="#333333" stroke-width="1.3"/><path d="M2520.0,444.7 L2606.0,444.7" fill="none" stroke="#333333" stroke-width="1.3"/><path d="M2520.0,465.3 L2606.0,465.3" fill="none" stroke="#333333" stroke-width="1.3"/><path d="M2909.0,403.4 L2992.0,403.4" fill="none" stroke="#333333" stroke-width="1.3"/><path d="M2909.0,423.8 L2992.0,423.8" fill="none" stroke="#333333" stroke-width="1.3"/><path d="M2909.0,567.9 L2992.0,567.9" fill="none" stroke="#6a1f22" stroke-width="1.3"/><path d="M2581.0,793.1 L3219.0,793.1" fill="none" stroke="#6a1f22" stroke-width="1.3"/><path d="M2581.0,813.5 L3134.5,813.5 L3134.5,1062.0" fill="none" stroke="#6a1f22" stroke-width="1.3"/><path d="M2581.0,833.9 L3219.0,833.9" fill="none" stroke="#6a1f22" stroke-width="1.3"/><path d="M2581.0,854.3 L2909.0,854.3 L2909.0,813.5" fill="none" stroke="#6a1f22" stroke-width="1.3"/><path d="M2623.0,854.3 L2623.0,741.4 L2655.0,741.4" fill="none" stroke="#6a1f22" stroke-width="1.3"/><path d="M2623.0,761.8 L2655.0,761.8" fill="none" stroke="#6a1f22" stroke-width="1.3"/><path d="M2888.5,854.3 L2888.5,1062.0" fill="none" stroke="#6a1f22" stroke-width="1.3"/><path d="M2581.0,874.7 L3052.0,874.7 L3052.0,1062.0" fill="none" stroke="#6a1f22" stroke-width="1.3"/><path d="M2581.0,895.1 L3052.0,895.1" fill="none" stroke="#6a1f22" stroke-width="1.3"/><path d="M2581.0,915.5 L2591.3,915.5 L2591.3,1062.0" fill="none" stroke="#6a1f22" stroke-width="1.3"/><path d="M2816.5,741.4 L2966.0,741.4" fill="none" stroke="#333333" stroke-width="1.3"/><path d="M2899.5,741.4 L2899.5,761.8 L2962.0,761.8" fill="none" stroke="#333333" stroke-width="1.3"/><path d="M3124.6,720.8 L3218.0,720.8" fill="none" stroke="#333333" stroke-width="1.3"/></svg>
<svg width="3272" height="1062">
<line x1="2272.5" y1="197" x2="3272" y2="197" stroke="#cfcfcf" stroke-width="1.2" stroke-dasharray="1.5,1.5"/><line x1="2272.5" y1="197" x2="2272.5" y2="1062" stroke="#dcdcdc" stroke-width="1.2"/><rect x="2274.5" y="639.5" width="1000" height="22" fill="#fff7c2" stroke="#3a3522" stroke-width="1.3"/><circle cx="2212" cy="794" r="14.5" fill="#c4c4c4"/><path d="M2294.8,270.3 L2509.7,270.3 L2509.7,291.2 L2294.8,291.2 A10.45,10.45 0 0 1 2294.8,270.3 Z" fill="#fff" stroke="#333" stroke-width="1.3"/><rect x="2305.7" y="271.0" width="152.5" height="19.5" fill="#e9e9e9"/><line x1="2458.2" y1="270.3" x2="2458.2" y2="291.2" stroke="#333" stroke-width="1.3"/><rect x="2293.1" y="279.1" width="2.6" height="6" fill="#111"/><rect x="2293.1" y="275.6" width="2.6" height="2.5" fill="#111"/><path d="M2509.7,275.4 L2516.2,275.4 L2519.7,280.8 L2516.2,286.1 L2509.7,286.1 Z" fill="#5fbf4a"/><path d="M2294.7,434.3 L2509.6,434.3 L2509.6,455.2 L2294.7,455.2 A10.45,10.45 0 0 1 2294.7,434.3 Z" fill="#fff" stroke="#333" stroke-width="1.3"/><rect x="2305.6" y="435.0" width="152.5" height="19.5" fill="#e9e9e9"/><line x1="2458.1" y1="434.3" x2="2458.1" y2="455.2" stroke="#333" stroke-width="1.3"/><rect x="2293.0" y="443.1" width="2.6" height="6" fill="#111"/><rect x="2293.0" y="439.6" width="2.6" height="2.5" fill="#111"/><path d="M2509.6,439.4 L2516.1,439.4 L2519.6,444.8 L2516.1,450.1 L2509.6,450.1 Z" fill="#5fbf4a"/><path d="M2294.7,455.1 L2509.6,455.1 L2509.6,476.0 L2294.7,476.0 A10.45,10.45 0 0 1 2294.7,455.1 Z" fill="#fff" stroke="#333" stroke-width="1.3"/><rect x="2305.6" y="455.8" width="152.5" height="19.5" fill="#e9e9e9"/><line x1="2458.1" y1="455.1" x2="2458.1" y2="476.0" stroke="#333" stroke-width="1.3"/><rect x="2293.0" y="463.9" width="2.6" height="6" fill="#111"/><rect x="2293.0" y="460.4" width="2.6" height="2.5" fill="#111"/><path d="M2509.6,460.2 L2516.1,460.2 L2519.6,465.6 L2516.1,470.9 L2509.6,470.9 Z" fill="#5fbf4a"/><path d="M2294.7,547.4 L2509.6,547.4 L2509.6,568.3 L2294.7,568.3 A10.45,10.45 0 0 1 2294.7,547.4 Z" fill="#fff" stroke="#333" stroke-width="1.3"/><rect x="2305.6" y="548.1" width="152.5" height="19.5" fill="#e9e9e9"/><line x1="2458.1" y1="547.4" x2="2458.1" y2="568.3" stroke="#333" stroke-width="1.3"/><rect x="2293.0" y="556.2" width="2.6" height="6" fill="#111"/><rect x="2293.0" y="552.6" width="2.6" height="2.5" fill="#111"/><path d="M2509.6,552.5 L2516.1,552.5 L2519.6,557.9 L2516.1,563.2 L2509.6,563.2 Z" fill="#5fbf4a"/><path d="M2294.7,577.6 L2509.6,577.6 L2509.6,598.5 L2294.7,598.5 A10.45,10.45 0 0 1 2294.7,577.6 Z" fill="#fff" stroke="#333" stroke-width="1.3"/><rect x="2305.6" y="578.3" width="152.5" height="19.5" fill="#e9e9e9"/><line x1="2458.1" y1="577.6" x2="2458.1" y2="598.5" stroke="#333" stroke-width="1.3"/><rect x="2293.0" y="586.5" width="2.6" height="6" fill="#111"/><rect x="2293.0" y="582.9" width="2.6" height="2.5" fill="#111"/><path d="M2509.6,582.7 L2516.1,582.7 L2519.6,588.1 L2516.1,593.5 L2509.6,593.5 Z" fill="#5fbf4a"/>
</svg>
<div class="b" style="left:2321.00px;top:440.00px;width:110.00px;height:16.00px;background:#f0ee10;border-radius:3px 3px 0 0"></div>
<div class="b" style="left:2317.30px;top:455.50px;width:114.50px;height:24.00px;background:#f0ee10;border-radius:0 0 3px 6px"></div>
<svg width="3272" height="1062"><line x1="2305" y1="455.1" x2="2458" y2="455.1" stroke="#333" stroke-width="1.3"/><line x1="2305" y1="475.5" x2="2458" y2="475.5" stroke="#333" stroke-width="1.3"/></svg>
<div class="t" style="left:2317.80px;top:272.62px;font-size:13.2px;color:#333;font-weight:normal;font-style:normal;">shellies_shelly1-32...</div>
<div class="t" style="left:1884.00px;width:1200px;text-align:center;top:272.09px;font-size:15.6px;color:#333;font-weight:bold;font-style:normal;">VI</div>
<div class="t" style="left:2317.80px;top:436.62px;font-size:13.2px;color:#333;font-weight:normal;font-style:normal;">shellies_shellyswitc...</div>
<div class="t" style="left:1884.00px;width:1200px;text-align:center;top:436.09px;font-size:15.6px;color:#333;font-weight:bold;font-style:normal;">VI</div>
<div class="t" style="left:2317.80px;top:457.42px;font-size:13.2px;color:#333;font-weight:normal;font-style:normal;">shellies_shellyswitc...</div>
<div class="t" style="left:1884.00px;width:1200px;text-align:center;top:456.89px;font-size:15.6px;color:#333;font-weight:bold;font-style:normal;">VI</div>
<div class="t" style="left:2317.80px;top:549.72px;font-size:13.2px;color:#333;font-weight:normal;font-style:normal;">shellies_shellyswitc...</div>
<div class="t" style="left:1884.00px;width:1200px;text-align:center;top:549.19px;font-size:15.6px;color:#333;font-weight:bold;font-style:normal;">VI</div>
<div class="t" style="left:2317.80px;top:579.92px;font-size:13.2px;color:#333;font-weight:normal;font-style:normal;">shellies_shellyswitc...</div>
<div class="t" style="left:1884.00px;width:1200px;text-align:center;top:579.39px;font-size:15.6px;color:#333;font-weight:bold;font-style:normal;">VI</div>
<svg width="3272" height="1062">
<path d="M2980.5,255.0 L2991.0,255.0 L2991.0,265.8 L2980.5,265.8 L2984.5,260.4 Z" fill="#f5aa4a"/><path d="M2991.0,250.3 L3206.2,250.3 A10.15,10.15 0 0 1 3206.2,270.6 L2991.0,270.6 Z" fill="#fff" stroke="#333" stroke-width="1.3"/><rect x="3042.3" y="251.0" width="153.5" height="18.9" fill="#e9e9e9"/><line x1="3042.3" y1="250.3" x2="3042.3" y2="270.6" stroke="#333" stroke-width="1.3"/><rect x="3205.1" y="258.8" width="2.6" height="6" fill="#111"/><rect x="3205.1" y="255.2" width="2.6" height="2.5" fill="#111"/><path d="M2990.5,398.2 L3001.0,398.2 L3001.0,409.0 L2990.5,409.0 L2994.5,403.6 Z" fill="#f5aa4a"/><path d="M3001.0,393.5 L3216.2,393.5 A10.15,10.15 0 0 1 3216.2,413.8 L3001.0,413.8 Z" fill="#fff" stroke="#333" stroke-width="1.3"/><rect x="3052.3" y="394.2" width="153.5" height="18.9" fill="#e9e9e9"/><line x1="3052.3" y1="393.5" x2="3052.3" y2="413.8" stroke="#333" stroke-width="1.3"/><rect x="3215.1" y="402.0" width="2.6" height="6" fill="#111"/><rect x="3215.1" y="398.4" width="2.6" height="2.5" fill="#111"/><path d="M2990.5,418.9 L3001.0,418.9 L3001.0,429.7 L2990.5,429.7 L2994.5,424.3 Z" fill="#f5aa4a"/><path d="M3001.0,414.2 L3216.2,414.2 A10.15,10.15 0 0 1 3216.2,434.5 L3001.0,434.5 Z" fill="#fff" stroke="#333" stroke-width="1.3"/><rect x="3052.3" y="414.9" width="153.5" height="18.9" fill="#e9e9e9"/><line x1="3052.3" y1="414.2" x2="3052.3" y2="434.5" stroke="#333" stroke-width="1.3"/><rect x="3215.1" y="422.7" width="2.6" height="6" fill="#111"/><rect x="3215.1" y="419.1" width="2.6" height="2.5" fill="#111"/><path d="M2990.5,562.2 L3001.0,562.2 L3001.0,573.0 L2990.5,573.0 L2994.5,567.6 Z" fill="#f5aa4a"/><path d="M3001.0,557.5 L3216.2,557.5 A10.15,10.15 0 0 1 3216.2,577.8 L3001.0,577.8 Z" fill="#fff" stroke="#333" stroke-width="1.3"/><rect x="3052.3" y="558.2" width="153.5" height="18.9" fill="#e9e9e9"/><line x1="3052.3" y1="557.5" x2="3052.3" y2="577.8" stroke="#333" stroke-width="1.3"/><rect x="3215.1" y="566.0" width="2.6" height="6" fill="#111"/><rect x="3215.1" y="562.4" width="2.6" height="2.5" fill="#111"/><path d="M3215.8,716.6 L3226.3,716.6 L3226.3,727.4 L3215.8,727.4 L3219.8,722.0 Z" fill="#f5aa4a"/><path d="M3226.3,711.9 L3416.1,711.9 A10.15,10.15 0 0 1 3416.1,732.2 L3226.3,732.2 Z" fill="#fff" stroke="#333" stroke-width="1.3"/><rect x="3277.6" y="712.6" width="153.5" height="18.9" fill="#e9e9e9"/><line x1="3277.6" y1="711.9" x2="3277.6" y2="732.2" stroke="#333" stroke-width="1.3"/><rect x="3415.0" y="720.4" width="2.6" height="6" fill="#111"/><rect x="3415.0" y="716.8" width="2.6" height="2.5" fill="#111"/>
</svg>
<div class="t" style="left:2416.60px;width:1200px;text-align:center;top:252.84px;font-size:15.6px;color:#333;font-weight:bold;font-style:normal;">VQ</div>
<div class="t" style="left:2426.60px;width:1200px;text-align:center;top:396.04px;font-size:15.6px;color:#333;font-weight:bold;font-style:normal;">VQ</div>
<div class="t" style="left:2426.60px;width:1200px;text-align:center;top:416.74px;font-size:15.6px;color:#333;font-weight:bold;font-style:normal;">VQ</div>
<div class="t" style="left:2426.60px;width:1200px;text-align:center;top:560.04px;font-size:15.6px;color:#333;font-weight:bold;font-style:normal;">VQ</div>
<div class="t" style="left:2651.90px;width:1200px;text-align:center;top:714.44px;font-size:15.6px;color:#333;font-weight:bold;font-style:normal;">VQ</div>
<div class="t" style="left:3056.40px;top:252.41px;font-size:16.4px;color:#333;font-weight:bold;font-style:normal;">Shelly1 Relais</div>
<div class="t" style="left:3065.00px;top:397.32px;font-size:13.2px;color:#333;font-weight:normal;font-style:normal;">ShellyRoller AUF</div>
<div class="t" style="left:3065.00px;top:418.02px;font-size:13.2px;color:#333;font-weight:normal;font-style:normal;">ShellyRoller AB</div>
<div class="t" style="left:3065.00px;top:561.32px;font-size:13.2px;color:#333;font-weight:normal;font-style:normal;">ShellyRoller Position</div>
<div>
<div class="b" style="left:2612.20px;top:198.00px;width:287.30px;height:112.80px;background:#fff;border:1.2px solid #9cc88a"></div>
<div class="b" style="left:2612.20px;top:198.00px;width:287.30px;height:31.00px;background:#65bf4f"></div>
<div class="b" style="left:2613.20px;top:229.00px;width:285.30px;height:20.60px;background:#e9e9e9"></div>
<div class="t" style="left:2155.85px;width:1200px;text-align:center;top:230.86px;font-size:16.7px;color:#333;font-weight:normal;font-style:normal;">EIB-Taster</div>
<div class="t" style="left:2622.20px;top:204.61px;font-size:16.4px;color:#eef8e0;font-weight:bold;font-style:normal;">Shelly1</div>
<div class="t" style="left:2625.20px;top:251.25px;font-size:16px;color:#111;font-weight:normal;font-style:normal;">Tr</div>
<div class="t" style="left:2625.20px;top:271.65px;font-size:16px;color:#111;font-weight:normal;font-style:normal;">S</div>
<div class="t" style="left:1686.00px;width:1200px;text-align:right;top:251.25px;font-size:16px;color:#111;font-weight:normal;font-style:normal;">Q</div>
<div class="t" style="left:2158.00px;width:1200px;text-align:center;top:250.23px;font-size:16.5px;color:#7c7c7c;font-weight:normal;font-style:normal;">Test</div>
<div class="t" style="left:2171.50px;width:1200px;text-align:center;top:270.63px;font-size:16.5px;color:#7c7c7c;font-weight:normal;font-style:normal;">Bedienelemente</div>
<div class="b" style="left:2612.20px;top:342.20px;width:287.30px;height:153.60px;background:#fff;border:1.2px solid #9cc88a"></div>
<div class="b" style="left:2612.20px;top:342.20px;width:287.30px;height:31.00px;background:#65bf4f"></div>
<div class="b" style="left:2613.20px;top:373.20px;width:285.30px;height:20.60px;background:#e9e9e9"></div>
<div class="t" style="left:2155.85px;width:1200px;text-align:center;top:375.06px;font-size:16.7px;color:#333;font-weight:normal;font-style:normal;">Automatikjalousie</div>
<div class="t" style="left:2622.20px;top:348.81px;font-size:16.4px;color:#eef8e0;font-weight:bold;font-style:normal;">Shelly2 Rollermodus</div>
<div class="t" style="left:2625.20px;top:395.45px;font-size:16px;color:#111;font-weight:normal;font-style:normal;">Up</div>
<div class="t" style="left:2625.20px;top:415.85px;font-size:16px;color:#111;font-weight:normal;font-style:normal;">Dw</div>
<div class="t" style="left:2625.20px;top:436.25px;font-size:16px;color:#111;font-weight:normal;font-style:normal;">Cu</div>
<div class="t" style="left:2625.20px;top:456.65px;font-size:16px;color:#111;font-weight:normal;font-style:normal;">Cd</div>
<div class="t" style="left:1686.00px;width:1200px;text-align:right;top:395.45px;font-size:16px;color:#111;font-weight:normal;font-style:normal;">Q↑</div>
<div class="t" style="left:1686.00px;width:1200px;text-align:right;top:415.85px;font-size:16px;color:#111;font-weight:normal;font-style:normal;">Q↓</div>
<div class="t" style="left:2155.00px;width:1200px;text-align:center;top:394.43px;font-size:16.5px;color:#7c7c7c;font-weight:normal;font-style:normal;">Test</div>
<div class="t" style="left:2157.00px;width:1200px;text-align:center;top:414.83px;font-size:16.5px;color:#7c7c7c;font-weight:normal;font-style:normal;">Bedienelemente</div>
<div class="b" style="left:2612.20px;top:506.90px;width:287.30px;height:112.80px;background:#fff;border:1.2px solid #9cc88a"></div>
<div class="b" style="left:2612.20px;top:506.90px;width:287.30px;height:31.00px;background:#65bf4f"></div>
<div class="b" style="left:2613.20px;top:537.90px;width:285.30px;height:20.60px;background:#e9e9e9"></div>
<div class="t" style="left:2155.85px;width:1200px;text-align:center;top:539.76px;font-size:16.7px;color:#333;font-weight:normal;font-style:normal;">2 Auswahltasten</div>
<div class="t" style="left:2622.20px;top:513.51px;font-size:16.4px;color:#eef8e0;font-weight:bold;font-style:normal;">ShellyRoller in Position</div>
<div class="t" style="left:2625.20px;top:560.15px;font-size:16px;color:#111;font-weight:normal;font-style:normal;">+</div>
<div class="t" style="left:2625.20px;top:580.55px;font-size:16px;color:#111;font-weight:normal;font-style:normal;">-</div>
<div class="t" style="left:1686.00px;width:1200px;text-align:right;top:560.15px;font-size:16px;color:#111;font-weight:normal;font-style:normal;">AQ</div>
<div class="t" style="left:2148.70px;width:1200px;text-align:center;top:559.13px;font-size:16.5px;color:#7c7c7c;font-weight:normal;font-style:normal;">Test</div>
<div class="t" style="left:2168.80px;width:1200px;text-align:center;top:579.53px;font-size:16.5px;color:#7c7c7c;font-weight:normal;font-style:normal;">Bedienelemente</div>
<div class="b" style="left:2284.40px;top:730.90px;width:287.00px;height:214.80px;background:#fff;border:1.2px solid #9cc88a"></div>
<div class="b" style="left:2284.40px;top:730.90px;width:287.00px;height:31.00px;background:#65bf4f"></div>
<div class="b" style="left:2285.40px;top:761.90px;width:285.00px;height:20.60px;background:#e9e9e9"></div>
<div class="t" style="left:1827.90px;width:1200px;text-align:center;top:763.76px;font-size:16.7px;color:#333;font-weight:normal;font-style:normal;">Lichtsteuerung</div>
<div class="t" style="left:2294.40px;top:737.51px;font-size:16.4px;color:#eef8e0;font-weight:bold;font-style:normal;">ShellyBulb</div>
<div class="t" style="left:2297.40px;top:784.15px;font-size:16px;color:#111;font-weight:normal;font-style:normal;">+</div>
<div class="t" style="left:2297.40px;top:804.55px;font-size:16px;color:#111;font-weight:normal;font-style:normal;">Mv</div>
<div class="t" style="left:2297.40px;top:824.95px;font-size:16px;color:#111;font-weight:normal;font-style:normal;">A</div>
<div class="t" style="left:2297.40px;top:845.35px;font-size:16px;color:#111;font-weight:normal;font-style:normal;">AIb</div>
<div class="t" style="left:1357.90px;width:1200px;text-align:right;top:784.15px;font-size:16px;color:#111;font-weight:normal;font-style:normal;">AQ1</div>
<div class="t" style="left:1357.90px;width:1200px;text-align:right;top:804.55px;font-size:16px;color:#111;font-weight:normal;font-style:normal;">AQ2</div>
<div class="t" style="left:1357.90px;width:1200px;text-align:right;top:824.95px;font-size:16px;color:#111;font-weight:normal;font-style:normal;">AQ3</div>
<div class="t" style="left:1357.90px;width:1200px;text-align:right;top:845.35px;font-size:16px;color:#111;font-weight:normal;font-style:normal;">AQ4</div>
<div class="t" style="left:1357.90px;width:1200px;text-align:right;top:865.75px;font-size:16px;color:#111;font-weight:normal;font-style:normal;">AQ5</div>
<div class="t" style="left:1357.90px;width:1200px;text-align:right;top:886.15px;font-size:16px;color:#111;font-weight:normal;font-style:normal;">AQ6</div>
<div class="t" style="left:1357.90px;width:1200px;text-align:right;top:906.55px;font-size:16px;color:#111;font-weight:normal;font-style:normal;">AQs</div>
<div class="t" style="left:1816.00px;width:1200px;text-align:center;top:783.13px;font-size:16.5px;color:#7c7c7c;font-weight:normal;font-style:normal;">Wintergarten</div>
<div class="t" style="left:1821.40px;width:1200px;text-align:center;top:803.53px;font-size:16.5px;color:#7c7c7c;font-weight:normal;font-style:normal;">Beleuchtung</div>
<div class="b" style="left:2663.30px;top:700.40px;width:143.20px;height:71.80px;background:#fff;border:1.2px solid #9cc88a"></div>
<div class="b" style="left:2663.30px;top:700.40px;width:143.20px;height:31.00px;background:#65bf4f"></div>
<div class="t" style="left:2673.30px;top:707.01px;font-size:16.4px;color:#eef8e0;font-weight:bold;font-style:normal;">ODER</div>
<div class="t" style="left:2676.30px;top:733.05px;font-size:16px;color:#111;font-weight:normal;font-style:normal;">I1</div>
<div class="t" style="left:2676.30px;top:753.45px;font-size:16px;color:#111;font-weight:normal;font-style:normal;">I2</div>
<div class="t" style="left:1593.00px;width:1200px;text-align:right;top:733.05px;font-size:16px;color:#111;font-weight:normal;font-style:normal;">Q</div>
<div class="b" style="left:2970.50px;top:680.00px;width:144.10px;height:112.60px;background:#fff;border:1.2px solid #9cc88a"></div>
<div class="b" style="left:2970.50px;top:680.00px;width:144.10px;height:31.00px;background:#65bf4f"></div>
<div class="t" style="left:2980.50px;top:686.61px;font-size:16.4px;color:#eef8e0;font-weight:bold;font-style:normal;">Tastscha...</div>
<div class="t" style="left:2983.50px;top:712.65px;font-size:16px;color:#111;font-weight:normal;font-style:normal;">Tr</div>
<div class="t" style="left:2983.50px;top:733.05px;font-size:16px;color:#c00;font-weight:normal;font-style:normal;">R</div>
<div class="t" style="left:2983.50px;top:753.45px;font-size:16px;color:#111;font-weight:normal;font-style:normal;">O</div>
<div class="t" style="left:1901.10px;width:1200px;text-align:right;top:712.65px;font-size:16px;color:#111;font-weight:normal;font-style:normal;">Q</div>
<div class="b" style="left:3226.70px;top:731.70px;width:200.00px;height:133.20px;background:#fff;border:1.2px solid #9cc88a"></div>
<div class="b" style="left:3226.70px;top:731.70px;width:200.00px;height:31.00px;background:#65bf4f"></div>
<div class="b" style="left:3227.70px;top:762.70px;width:198.00px;height:20.60px;background:#e9e9e9"></div>
<div class="t" style="left:2726.70px;width:1200px;text-align:center;top:764.56px;font-size:16.7px;color:#333;font-weight:normal;font-style:normal;"></div>
<div class="t" style="left:3236.70px;top:738.31px;font-size:16.4px;color:#eef8e0;font-weight:bold;font-style:normal;">RGB</div>
<div class="t" style="left:3239.70px;top:784.95px;font-size:16px;color:#111;font-weight:normal;font-style:normal;">AI</div>
<div class="t" style="left:3239.70px;top:805.35px;font-size:16px;color:#111;font-weight:normal;font-style:normal;">+</div>
<div class="t" style="left:3239.70px;top:825.75px;font-size:16px;color:#111;font-weight:normal;font-style:normal;">R</div>
<svg width="3272" height="1062"><circle cx="2884.0" cy="214.3" r="10" fill="#fff"/><rect x="2882.6" y="212.3" width="2.8" height="7" fill="#111"/><rect x="2882.6" y="208.3" width="2.8" height="2.6" fill="#111"/><path d="M2601.7,254.4 L2612.2,254.4 L2612.2,265.2 L2601.7,265.2 L2605.7,259.8 Z" fill="#f5aa4a"/><path d="M2601.7,274.8 L2612.2,274.8 L2612.2,285.6 L2601.7,285.6 L2605.7,280.2 Z" fill="#f5aa4a"/><path d="M2601.7,295.2 L2612.2,295.2 L2612.2,306.0 L2601.7,306.0 L2605.7,300.6 Z" fill="#d4d4d4"/><circle cx="2630.6" cy="300.6" r="7.3" fill="#9a9a9a"/><path d="M2626.3,300.6 L2634.9,300.6 M2630.6,296.3 L2630.6,304.9" stroke="#fff" stroke-width="1.6"/><path d="M2899.5,254.4 L2906.0,254.4 L2909.5,259.8 L2906.0,265.2 L2899.5,265.2 Z" fill="#5fbf4a"/><circle cx="2884.0" cy="358.5" r="10" fill="#fff"/><rect x="2882.6" y="356.5" width="2.8" height="7" fill="#111"/><rect x="2882.6" y="352.5" width="2.8" height="2.6" fill="#111"/><path d="M2601.7,398.6 L2612.2,398.6 L2612.2,409.4 L2601.7,409.4 L2605.7,404.0 Z" fill="#f5aa4a"/><path d="M2601.7,419.0 L2612.2,419.0 L2612.2,429.8 L2601.7,429.8 L2605.7,424.4 Z" fill="#f5aa4a"/><path d="M2601.7,439.4 L2612.2,439.4 L2612.2,450.2 L2601.7,450.2 L2605.7,444.8 Z" fill="#f5aa4a"/><path d="M2601.7,459.8 L2612.2,459.8 L2612.2,470.6 L2601.7,470.6 L2605.7,465.2 Z" fill="#f5aa4a"/><path d="M2601.7,480.2 L2612.2,480.2 L2612.2,491.0 L2601.7,491.0 L2605.7,485.6 Z" fill="#d4d4d4"/><circle cx="2630.6" cy="485.6" r="7.3" fill="#9a9a9a"/><path d="M2626.3,485.6 L2634.9,485.6 M2630.6,481.3 L2630.6,489.9" stroke="#fff" stroke-width="1.6"/><path d="M2899.5,398.6 L2906.0,398.6 L2909.5,404.0 L2906.0,409.4 L2899.5,409.4 Z" fill="#5fbf4a"/><path d="M2899.5,419.0 L2906.0,419.0 L2909.5,424.4 L2906.0,429.8 L2899.5,429.8 Z" fill="#5fbf4a"/><path d="M2899.5,439.4 L2906.0,439.4 L2909.5,444.8 L2906.0,450.2 L2899.5,450.2 Z" fill="#d4d4d4"/><circle cx="2881.1" cy="444.8" r="7.3" fill="#9a9a9a"/><path d="M2876.8,444.8 L2885.4,444.8 M2881.1,440.5 L2881.1,449.1" stroke="#fff" stroke-width="1.6"/><circle cx="2884.0" cy="523.2" r="10" fill="#fff"/><rect x="2882.6" y="521.2" width="2.8" height="7" fill="#111"/><rect x="2882.6" y="517.2" width="2.8" height="2.6" fill="#111"/><path d="M2601.7,563.3 L2612.2,563.3 L2612.2,574.1 L2601.7,574.1 L2605.7,568.7 Z" fill="#f5aa4a"/><path d="M2601.7,583.7 L2612.2,583.7 L2612.2,594.5 L2601.7,594.5 L2605.7,589.1 Z" fill="#f5aa4a"/><path d="M2601.7,604.1 L2612.2,604.1 L2612.2,614.9 L2601.7,614.9 L2605.7,609.5 Z" fill="#d4d4d4"/><circle cx="2630.6" cy="609.5" r="7.3" fill="#9a9a9a"/><path d="M2626.3,609.5 L2634.9,609.5 M2630.6,605.2 L2630.6,613.8" stroke="#fff" stroke-width="1.6"/><path d="M2899.5,563.3 L2906.0,563.3 L2909.5,568.7 L2906.0,574.1 L2899.5,574.1 Z" fill="#5fbf4a"/><circle cx="2555.9" cy="747.2" r="10" fill="#fff"/><rect x="2554.5" y="745.2" width="2.8" height="7" fill="#111"/><rect x="2554.5" y="741.2" width="2.8" height="2.6" fill="#111"/><circle cx="2532.4" cy="746.9" r="10" fill="#fff"/><g fill="#a8d898"><circle cx="2532.4" cy="746.9" r="2.4"/><circle cx="2525.9" cy="746.9" r="1.3"/><circle cx="2538.9" cy="746.9" r="1.3"/><circle cx="2532.4" cy="740.4" r="1.3"/><circle cx="2532.4" cy="753.4" r="1.3"/></g><path d="M2273.9,787.3 L2284.4,787.3 L2284.4,798.1 L2273.9,798.1 L2277.9,792.7 Z" fill="#f5aa4a"/><path d="M2273.9,807.7 L2284.4,807.7 L2284.4,818.5 L2273.9,818.5 L2277.9,813.1 Z" fill="#f5aa4a"/><path d="M2273.9,828.1 L2284.4,828.1 L2284.4,838.9 L2273.9,838.9 L2277.9,833.5 Z" fill="#f5aa4a"/><path d="M2273.9,848.5 L2284.4,848.5 L2284.4,859.3 L2273.9,859.3 L2277.9,853.9 Z" fill="#f5aa4a"/><path d="M2273.9,868.9 L2284.4,868.9 L2284.4,879.7 L2273.9,879.7 L2277.9,874.3 Z" fill="#d4d4d4"/><circle cx="2302.8" cy="874.3" r="7.3" fill="#9a9a9a"/><path d="M2298.5,874.3 L2307.1,874.3 M2302.8,870.0 L2302.8,878.6" stroke="#fff" stroke-width="1.6"/><path d="M2571.4,787.3 L2577.9,787.3 L2581.4,792.7 L2577.9,798.1 L2571.4,798.1 Z" fill="#5fbf4a"/><path d="M2571.4,807.7 L2577.9,807.7 L2581.4,813.1 L2577.9,818.5 L2571.4,818.5 Z" fill="#5fbf4a"/><path d="M2571.4,828.1 L2577.9,828.1 L2581.4,833.5 L2577.9,838.9 L2571.4,838.9 Z" fill="#5fbf4a"/><path d="M2571.4,848.5 L2577.9,848.5 L2581.4,853.9 L2577.9,859.3 L2571.4,859.3 Z" fill="#5fbf4a"/><path d="M2571.4,868.9 L2577.9,868.9 L2581.4,874.3 L2577.9,879.7 L2571.4,879.7 Z" fill="#5fbf4a"/><path d="M2571.4,889.3 L2577.9,889.3 L2581.4,894.7 L2577.9,900.1 L2571.4,900.1 Z" fill="#5fbf4a"/><path d="M2571.4,909.7 L2577.9,909.7 L2581.4,915.1 L2577.9,920.5 L2571.4,920.5 Z" fill="#5fbf4a"/><path d="M2571.4,930.1 L2577.9,930.1 L2581.4,935.5 L2577.9,940.9 L2571.4,940.9 Z" fill="#d4d4d4"/><circle cx="2553.0" cy="935.5" r="7.3" fill="#9a9a9a"/><path d="M2548.7,935.5 L2557.3,935.5 M2553.0,931.2 L2553.0,939.8" stroke="#fff" stroke-width="1.6"/><circle cx="2791.0" cy="716.7" r="10" fill="#fff"/><rect x="2789.6" y="714.7" width="2.8" height="7" fill="#111"/><rect x="2789.6" y="710.7" width="2.8" height="2.6" fill="#111"/><path d="M2652.8,736.2 L2663.3,736.2 L2663.3,747.0 L2652.8,747.0 L2656.8,741.6 Z" fill="#f5aa4a"/><path d="M2652.8,756.6 L2663.3,756.6 L2663.3,767.4 L2652.8,767.4 L2656.8,762.0 Z" fill="#f5aa4a"/><path d="M2806.5,736.2 L2813.0,736.2 L2816.5,741.6 L2813.0,747.0 L2806.5,747.0 Z" fill="#5fbf4a"/><circle cx="3099.1" cy="696.3" r="10" fill="#fff"/><rect x="3097.7" y="694.3" width="2.8" height="7" fill="#111"/><rect x="3097.7" y="690.3" width="2.8" height="2.6" fill="#111"/><path d="M2960.0,715.8 L2970.5,715.8 L2970.5,726.6 L2960.0,726.6 L2964.0,721.2 Z" fill="#f5aa4a"/><path d="M2960.0,736.2 L2970.5,736.2 L2970.5,747.0 L2960.0,747.0 L2964.0,741.6 Z" fill="#f5aa4a"/><path d="M2960.0,756.6 L2970.5,756.6 L2970.5,767.4 L2960.0,767.4 L2964.0,762.0 Z" fill="#f5aa4a"/><path d="M2960.0,777.0 L2970.5,777.0 L2970.5,787.8 L2960.0,787.8 L2964.0,782.4 Z" fill="#d4d4d4"/><circle cx="2988.9" cy="782.4" r="7.3" fill="#9a9a9a"/><path d="M2984.6,782.4 L2993.2,782.4 M2988.9,778.1 L2988.9,786.7" stroke="#fff" stroke-width="1.6"/><path d="M3114.6,715.8 L3121.1,715.8 L3124.6,721.2 L3121.1,726.6 L3114.6,726.6 Z" fill="#5fbf4a"/><path d="M3114.6,736.2 L3121.1,736.2 L3124.6,741.6 L3121.1,747.0 L3114.6,747.0 Z" fill="#d4d4d4"/><circle cx="3096.2" cy="741.6" r="7.3" fill="#9a9a9a"/><path d="M3091.9,741.6 L3100.5,741.6 M3096.2,737.3 L3096.2,745.9" stroke="#fff" stroke-width="1.6"/><circle cx="3411.2" cy="748.0" r="10" fill="#fff"/><rect x="3409.8" y="746.0" width="2.8" height="7" fill="#111"/><rect x="3409.8" y="742.0" width="2.8" height="2.6" fill="#111"/><path d="M3216.2,788.1 L3226.7,788.1 L3226.7,798.9 L3216.2,798.9 L3220.2,793.5 Z" fill="#f5aa4a"/><path d="M3216.2,808.5 L3226.7,808.5 L3226.7,819.3 L3216.2,819.3 L3220.2,813.9 Z" fill="#f5aa4a"/><path d="M3216.2,828.9 L3226.7,828.9 L3226.7,839.7 L3216.2,839.7 L3220.2,834.3 Z" fill="#f5aa4a"/><path d="M3216.2,849.3 L3226.7,849.3 L3226.7,860.1 L3216.2,860.1 L3220.2,854.7 Z" fill="#d4d4d4"/><circle cx="3245.1" cy="854.7" r="7.3" fill="#9a9a9a"/><path d="M3240.8,854.7 L3249.4,854.7 M3245.1,850.4 L3245.1,859.0" stroke="#fff" stroke-width="1.6"/></svg>
</div>
<svg width="3272" height="1062"><circle cx="2972.5" cy="741.3" r="3.3" fill="#fff" stroke="#111" stroke-width="1.8"/></svg>
</div>
</body></html>
